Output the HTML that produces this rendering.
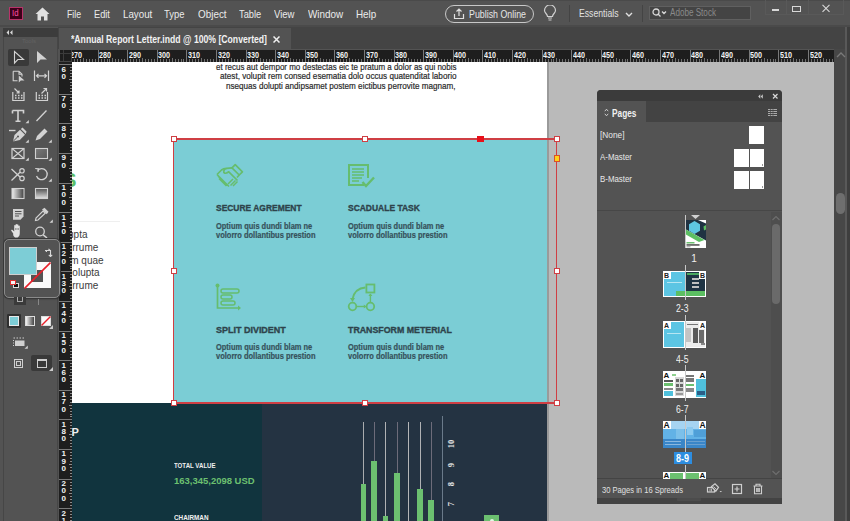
<!DOCTYPE html><html><head><meta charset="utf-8"><style>
*{margin:0;padding:0;box-sizing:border-box}
html,body{width:850px;height:521px;overflow:hidden;background:#535353;font-family:"Liberation Sans",sans-serif}
.a{position:absolute}
.t{position:absolute;white-space:nowrap;line-height:1;transform-origin:0 0}
</style></head><body><div class="a" style="left:0;top:0;width:850px;height:27px;background:#535353"></div><div class="a" style="left:0;top:0;width:850px;height:1px;background:#4a4a4a"></div><div class="a" style="left:0;top:25px;width:850px;height:2px;background:#4a4a4a"></div><div class="a" style="left:9px;top:6.5px;width:13.5px;height:13.5px;background:#3c0019;border:1px solid #b8346a"></div><div class="t" style="left:12.3px;top:9.3px;font-size:8.5px;color:#ff50a8;transform:scaleX(0.9163)">Id</div><svg class="a" style="left:35px;top:7px" width="15" height="14" viewBox="0 0 15 14"><path d="M7.5 0.5 L0.5 7 H2.5 V13.5 H6 V9.5 H9 V13.5 H12.5 V7 H14.5 Z" fill="#e0e0e0"/></svg><div class="t" style="left:66.7px;top:8.7px;font-size:10.5px;color:#ebebeb;transform:scaleX(0.8332)">File</div><div class="t" style="left:93.9px;top:8.7px;font-size:10.5px;color:#ebebeb;transform:scaleX(0.8788)">Edit</div><div class="t" style="left:122.5px;top:8.7px;font-size:10.5px;color:#ebebeb;transform:scaleX(0.9292)">Layout</div><div class="t" style="left:164.0px;top:8.7px;font-size:10.5px;color:#ebebeb;transform:scaleX(0.8961)">Type</div><div class="t" style="left:197.7px;top:8.7px;font-size:10.5px;color:#ebebeb;transform:scaleX(0.9420)">Object</div><div class="t" style="left:238.9px;top:8.7px;font-size:10.5px;color:#ebebeb;transform:scaleX(0.8841)">Table</div><div class="t" style="left:274.2px;top:8.7px;font-size:10.5px;color:#ebebeb;transform:scaleX(0.9080)">View</div><div class="t" style="left:308.3px;top:8.7px;font-size:10.5px;color:#ebebeb;transform:scaleX(0.9422)">Window</div><div class="t" style="left:356.1px;top:8.7px;font-size:10.5px;color:#ebebeb;transform:scaleX(0.9394)">Help</div><div class="a" style="left:445px;top:5px;width:89px;height:18px;border:1.2px solid #c8c8c8;border-radius:9px"></div><svg class="a" style="left:453px;top:8px" width="12" height="12" viewBox="0 0 12 12"><path d="M6 1 V8 M3.5 3.5 L6 1 L8.5 3.5 M1.5 6 V10.5 H10.5 V6" stroke="#e0e0e0" stroke-width="1.2" fill="none"/></svg><div class="t" style="left:469px;top:8.5px;font-size:10.5px;color:#e6e6e6;transform:scaleX(0.8417)">Publish Online</div><svg class="a" style="left:543px;top:5px" width="14" height="17" viewBox="0 0 14 17"><path d="M4.5 11.5 C4.5 9 1.5 8 1.5 5.5 A5.5 5.5 0 0 1 12.5 5.5 C12.5 8 9.5 9 9.5 11.5 Z" stroke="#d0d0d0" stroke-width="1.2" fill="none"/><path d="M5 13 H9 M5.5 15 H8.5" stroke="#d0d0d0" stroke-width="1.2"/></svg><div class="a" style="left:569px;top:5px;width:1px;height:17px;background:#444"></div><div class="t" style="left:579px;top:8px;font-size:10.5px;color:#e0e0e0;transform:scaleX(0.8253)">Essentials</div><svg class="a" style="left:625px;top:12px" width="8" height="6" viewBox="0 0 8 6"><path d="M1 1 L4 4 L7 1" stroke="#e0e0e0" stroke-width="1.4" fill="none"/></svg><div class="a" style="left:642px;top:5px;width:1px;height:17px;background:#444"></div><div class="a" style="left:649px;top:6px;width:102px;height:14px;background:#444444;border:1px solid #606060"></div><svg class="a" style="left:652px;top:8px" width="16" height="10" viewBox="0 0 16 10"><circle cx="4" cy="4" r="3" stroke="#d8d8d8" stroke-width="1.3" fill="none"/><path d="M6 6 L8.5 8.5 M10 3.5 L12 5.5 L14 3.5" stroke="#d8d8d8" stroke-width="1.3" fill="none"/></svg><div class="t" style="left:669.5px;top:8px;font-size:10px;color:#8a8a8a;transform:scaleX(0.8110)">Adobe Stock</div><div class="a" style="left:765px;top:0;width:79px;height:15px;border:1px solid #595959;border-top:none"></div><div class="a" style="left:786px;top:0;width:1px;height:15px;background:#595959"></div><div class="a" style="left:808px;top:0;width:1px;height:15px;background:#595959"></div><div class="a" style="left:772px;top:9px;width:7px;height:2px;background:#d8d8d8"></div><div class="a" style="left:792px;top:6px;width:9px;height:6px;border:1.5px solid #d8d8d8"></div><svg class="a" style="left:821px;top:4px" width="10" height="9" viewBox="0 0 10 9"><path d="M1.5 0.8 L8.5 7.8 M8.5 0.8 L1.5 7.8" stroke="#d8d8d8" stroke-width="1.1"/></svg><div class="a" style="left:58px;top:27px;width:792px;height:22px;background:#444444"></div><div class="a" style="left:59px;top:28px;width:232px;height:21px;background:#535353"></div><div class="t" style="left:70.8px;top:34px;font-size:10.5px;color:#f2f2f2;font-weight:bold;transform:scaleX(0.8243)">*Annual Report Letter.indd @ 100% [Converted]</div><svg class="a" style="left:273px;top:36px" width="7" height="7" viewBox="0 0 7 7"><path d="M0.5 0.5 L6.5 6.5 M6.5 0.5 L0.5 6.5" stroke="#f0f0f0" stroke-width="1.5"/></svg><div class="a" style="left:72px;top:62px;width:763px;height:459px;background:#bababa"></div><div class="a" style="left:72px;top:62px;width:475px;height:341px;background:#ffffff"></div><div class="a" style="left:547px;top:62px;width:2px;height:459px;background:#9a9a9a"></div><div class="t" style="left:216px;top:61.6px;font-size:9.5px;color:#282828;transform:scaleX(0.8403);-webkit-text-stroke:0.2px #282828">et recus aut dempor mo destectas eic te pratum a dolor as qui nobis</div><div class="t" style="left:220px;top:71.1px;font-size:9.5px;color:#282828;transform:scaleX(0.8579);-webkit-text-stroke:0.2px #282828">atest, volupit rem consed esematia dolo occus quatenditat laborio</div><div class="t" style="left:226px;top:81.1px;font-size:9.5px;color:#282828;transform:scaleX(0.8538);-webkit-text-stroke:0.2px #282828">nsequas dolupti andipsamet postem eictibus perrovite magnam,</div><div class="a" style="left:72px;top:165px;width:8px;height:28px;overflow:hidden"><div class="t" style="left:-9.5px;top:4.2px;font-size:21px;font-weight:bold;color:#5cbf6a">S</div></div><div class="a" style="left:72px;top:221px;width:48px;height:1px;background:#efefef"></div><div class="t" style="left:68.03px;top:230.2px;font-size:10px;color:#3c3c3c">upta</div><div class="t" style="left:72.17px;top:243.1px;font-size:10px;color:#3c3c3c">rrume</div><div class="t" style="left:70.24px;top:255.6px;font-size:10px;color:#3c3c3c">m quae</div><div class="t" style="left:72.35px;top:268px;font-size:10px;color:#3c3c3c">olupta</div><div class="t" style="left:72.17px;top:280.6px;font-size:10px;color:#3c3c3c">rrume</div><div class="a" style="left:174px;top:139.5px;width:373px;height:263px;background:#7bcdd5"></div><svg class="a" style="left:211.5px;top:159.2px" width="34" height="34" viewBox="0 0 34 34"><path d="M20 8.8 L23.2 5.6 L30.4 12.8 L27.2 16 Z" fill="none" stroke="#66bd6e" stroke-width="1.7" stroke-linejoin="round"/><path d="M5 15.5 L9.5 11 C11 9.8 12.5 9.4 14.5 9.4 L20 8.8" fill="none" stroke="#66bd6e" stroke-width="1.7" stroke-linejoin="round"/><path d="M14.5 9.4 C11.5 10 11 13.3 12.8 14.1 C14 14.6 15.3 13.8 16.8 12.8 L25.5 21.5" fill="none" stroke="#66bd6e" stroke-width="1.7" stroke-linejoin="round"/><path d="M27.2 16 L25 18.5" stroke="#66bd6e" stroke-width="1.7"/><path d="M5 15.5 L17 27.5 M7 19.5 L14.5 27 M6 17 L15.5 26.5" stroke="#66bd6e" stroke-width="1.6"/><path d="M16 25 L21 20 M18.5 26.5 L23.5 21.5 M21 27 L25.5 22.5" stroke="#66bd6e" stroke-width="1.5"/></svg><svg class="a" style="left:347px;top:163px" width="29" height="26" viewBox="0 0 29 26"><path d="M17 22 H2 V2 H21 V15" fill="none" stroke="#66bd6e" stroke-width="2"/><path d="M5 6 H17 M5 9 H17 M5 12 H17 M5 15 H15 M5 18 H12" stroke="#66bd6e" stroke-width="1.6"/><path d="M15.5 19 L19 23 L27 14.5" fill="none" stroke="#66bd6e" stroke-width="2.4"/></svg><svg class="a" style="left:214px;top:282px" width="30" height="31" viewBox="0 0 30 31"><circle cx="3.5" cy="3.5" r="2" fill="#66bd6e"/><path d="M3.5 3.5 V26 H26" fill="none" stroke="#66bd6e" stroke-width="1.7"/><path d="M24 23.5 L27 26 L24 28.5 Z" fill="#66bd6e"/><rect x="7" y="7" width="18" height="4" rx="2" fill="none" stroke="#66bd6e" stroke-width="1.5"/><rect x="7" y="13" width="11" height="4" rx="2" fill="none" stroke="#66bd6e" stroke-width="1.5"/><rect x="7" y="19" width="14" height="4" rx="2" fill="none" stroke="#66bd6e" stroke-width="1.5"/></svg><svg class="a" style="left:347px;top:282px" width="30" height="31" viewBox="0 0 30 31"><rect x="19.4" y="2.5" width="8" height="8" fill="none" stroke="#66bd6e" stroke-width="1.8"/><circle cx="5.5" cy="24.5" r="3.8" fill="none" stroke="#66bd6e" stroke-width="1.8"/><circle cx="23.4" cy="24.5" r="3.8" fill="none" stroke="#66bd6e" stroke-width="1.8"/><path d="M18.4 5.5 C11.5 6 7 10 5.5 17" fill="none" stroke="#66bd6e" stroke-width="1.8"/><path d="M3 16 L5.5 20 L8 16 Z" fill="#66bd6e"/><path d="M9.5 24.5 H18.5" stroke="#66bd6e" stroke-width="1.4"/><path d="M16.8 22.5 L19.4 24.5 L16.8 26.5 Z" fill="#66bd6e"/><path d="M23.4 20.5 V12" stroke="#66bd6e" stroke-width="1.4"/><path d="M21.4 14 L23.4 11.5 L25.4 14 Z" fill="#66bd6e"/></svg><div class="t" style="left:215.8px;top:202.84px;font-size:9.4px;color:#2e434b;font-weight:bold;transform:scaleX(0.9012);-webkit-text-stroke:0.35px #2e434b">SECURE AGREMENT</div><div class="t" style="left:215.8px;top:221.87px;font-size:8.3px;color:#36525b;font-weight:bold;transform:scaleX(0.8996);-webkit-text-stroke:0.2px #36525b">Optium quis dundi blam ne</div><div class="t" style="left:215.8px;top:230.67px;font-size:8.3px;color:#36525b;font-weight:bold;transform:scaleX(0.9031);-webkit-text-stroke:0.2px #36525b">volorro dollantibus prestion</div><div class="t" style="left:348.2px;top:202.84px;font-size:9.4px;color:#2e434b;font-weight:bold;transform:scaleX(0.9030);-webkit-text-stroke:0.35px #2e434b">SCADUALE TASK</div><div class="t" style="left:348.2px;top:221.87px;font-size:8.3px;color:#36525b;font-weight:bold;transform:scaleX(0.8996);-webkit-text-stroke:0.2px #36525b">Optium quis dundi blam ne</div><div class="t" style="left:348.2px;top:230.67px;font-size:8.3px;color:#36525b;font-weight:bold;transform:scaleX(0.9031);-webkit-text-stroke:0.2px #36525b">volorro dollantibus prestion</div><div class="t" style="left:215.8px;top:324.94px;font-size:9.4px;color:#2e434b;font-weight:bold;transform:scaleX(0.9572);-webkit-text-stroke:0.35px #2e434b">SPLIT DIVIDENT</div><div class="t" style="left:215.8px;top:342.97px;font-size:8.3px;color:#36525b;font-weight:bold;transform:scaleX(0.8996);-webkit-text-stroke:0.2px #36525b">Optium quis dundi blam ne</div><div class="t" style="left:215.8px;top:352.47px;font-size:8.3px;color:#36525b;font-weight:bold;transform:scaleX(0.9031);-webkit-text-stroke:0.2px #36525b">volorro dollantibus prestion</div><div class="t" style="left:348.2px;top:324.94px;font-size:9.4px;color:#2e434b;font-weight:bold;transform:scaleX(0.9400);-webkit-text-stroke:0.35px #2e434b">TRANSFORM METERIAL</div><div class="t" style="left:348.2px;top:342.97px;font-size:8.3px;color:#36525b;font-weight:bold;transform:scaleX(0.8996);-webkit-text-stroke:0.2px #36525b">Optium quis dundi blam ne</div><div class="t" style="left:348.2px;top:352.47px;font-size:8.3px;color:#36525b;font-weight:bold;transform:scaleX(0.9031);-webkit-text-stroke:0.2px #36525b">volorro dollantibus prestion</div><div class="a" style="left:72px;top:403px;width:190px;height:118px;background:#11343e"></div><div class="a" style="left:262px;top:403px;width:285px;height:118px;background:#243342"></div><div class="t" style="left:71.46px;top:426.7px;font-size:11px;color:#f0f0f0;font-weight:bold">P</div><div class="t" style="left:173.8px;top:462px;font-size:7.5px;color:#f0f0f0;font-weight:bold;transform:scaleX(0.8137)">TOTAL VALUE</div><div class="t" style="left:173.8px;top:477.2px;font-size:9px;color:#6cc070;font-weight:bold;transform:scaleX(1.0527)">163,345,2098 USD</div><div class="t" style="left:173.8px;top:514px;font-size:7.5px;color:#f0f0f0;font-weight:bold;transform:scaleX(0.8447)">CHAIRMAN</div><div class="a" style="left:362.8px;top:422px;width:1.2px;height:99px;background:#a9acae"></div><div class="a" style="left:360.5px;top:484px;width:5.6px;height:37px;background:#6cc070"></div><div class="a" style="left:373.5px;top:422px;width:1.2px;height:99px;background:#6d6c7a"></div><div class="a" style="left:371.2px;top:460.5px;width:5.6px;height:60.5px;background:#6cc070"></div><div class="a" style="left:385.1px;top:422px;width:1.2px;height:99px;background:#b0b2b4"></div><div class="a" style="left:382.8px;top:516px;width:5.6px;height:5px;background:#6cc070"></div><div class="a" style="left:396.5px;top:422px;width:1.2px;height:99px;background:#6d6c7a"></div><div class="a" style="left:394.2px;top:473.4px;width:5.6px;height:47.60000000000002px;background:#6cc070"></div><div class="a" style="left:408.1px;top:422px;width:1.2px;height:99px;background:#b5b7b8"></div><div class="a" style="left:419.5px;top:422px;width:1.2px;height:99px;background:#b0b2b4"></div><div class="a" style="left:417.2px;top:488.7px;width:5.6px;height:32.30000000000001px;background:#6cc070"></div><div class="a" style="left:430.5px;top:422px;width:1.2px;height:99px;background:#6d6c7a"></div><div class="a" style="left:428.2px;top:500.3px;width:5.6px;height:20.69999999999999px;background:#6cc070"></div><div class="a" style="left:442.2px;top:416px;width:1.2px;height:105px;background:#6a7a8a"></div><div class="t" style="left:451px;top:443.5px;font-size:8.5px;font-weight:bold;color:#e8e8e8;font-family:'Liberation Serif',serif;transform:translate(-50%,-50%) rotate(-90deg);transform-origin:50% 50%;">10</div><div class="t" style="left:451px;top:465.2px;font-size:8.5px;font-weight:bold;color:#e8e8e8;font-family:'Liberation Serif',serif;transform:translate(-50%,-50%) rotate(-90deg);transform-origin:50% 50%;">9</div><div class="t" style="left:451px;top:484px;font-size:8.5px;font-weight:bold;color:#e8e8e8;font-family:'Liberation Serif',serif;transform:translate(-50%,-50%) rotate(-90deg);transform-origin:50% 50%;">8</div><div class="t" style="left:451px;top:503.8px;font-size:8.5px;font-weight:bold;color:#e8e8e8;font-family:'Liberation Serif',serif;transform:translate(-50%,-50%) rotate(-90deg);transform-origin:50% 50%;">7</div><div class="a" style="left:483.5px;top:514.7px;width:15.3px;height:7px;background:#6cc070"></div><div class="a" style="left:489.5px;top:519px;width:4px;height:2px;background:#e8f5e8;border-radius:2px 2px 0 0"></div><div class="a" style="left:173px;top:138.3px;width:384px;height:1.4px;background:#cf3f44"></div><div class="a" style="left:173px;top:402.3px;width:384px;height:1.4px;background:#cf3f44"></div><div class="a" style="left:172.8px;top:138.5px;width:1.4px;height:265px;background:#cf3f44"></div><div class="a" style="left:555.8px;top:138.5px;width:1.4px;height:265px;background:#cf3f44"></div><div class="a" style="left:170.5px;top:136px;width:6px;height:6px;background:#fff;border:1px solid #cf3f44"></div><div class="a" style="left:170.5px;top:268px;width:6px;height:6px;background:#fff;border:1px solid #cf3f44"></div><div class="a" style="left:170.5px;top:400px;width:6px;height:6px;background:#fff;border:1px solid #cf3f44"></div><div class="a" style="left:362.2px;top:136px;width:6px;height:6px;background:#fff;border:1px solid #cf3f44"></div><div class="a" style="left:362.2px;top:400px;width:6px;height:6px;background:#fff;border:1px solid #cf3f44"></div><div class="a" style="left:553.5px;top:136px;width:6px;height:6px;background:#fff;border:1px solid #cf3f44"></div><div class="a" style="left:553.5px;top:268px;width:6px;height:6px;background:#fff;border:1px solid #cf3f44"></div><div class="a" style="left:553.5px;top:400px;width:6px;height:6px;background:#fff;border:1px solid #cf3f44"></div><div class="a" style="left:477px;top:136.3px;width:6.5px;height:6.2px;background:#e8101a"></div><div class="a" style="left:553.5px;top:155px;width:6.5px;height:7px;background:#ffd11a;border:1px solid #d9502a"></div><div class="a" style="left:60px;top:50px;width:774px;height:12px;background:#1e1e1e;overflow:hidden"><div class="t" style="left:-20.0px;top:0.9px;font-size:9px;font-weight:bold;color:#f2f2f2;transform:scaleX(0.8)">260</div><div class="t" style="left:9.6px;top:0.9px;font-size:9px;font-weight:bold;color:#f2f2f2;transform:scaleX(0.8)">270</div><div class="t" style="left:39.2px;top:0.9px;font-size:9px;font-weight:bold;color:#f2f2f2;transform:scaleX(0.8)">280</div><div class="t" style="left:68.8px;top:0.9px;font-size:9px;font-weight:bold;color:#f2f2f2;transform:scaleX(0.8)">290</div><div class="t" style="left:98.4px;top:0.9px;font-size:9px;font-weight:bold;color:#f2f2f2;transform:scaleX(0.8)">300</div><div class="t" style="left:128.0px;top:0.9px;font-size:9px;font-weight:bold;color:#f2f2f2;transform:scaleX(0.8)">310</div><div class="t" style="left:157.6px;top:0.9px;font-size:9px;font-weight:bold;color:#f2f2f2;transform:scaleX(0.8)">320</div><div class="t" style="left:187.2px;top:0.9px;font-size:9px;font-weight:bold;color:#f2f2f2;transform:scaleX(0.8)">330</div><div class="t" style="left:216.8px;top:0.9px;font-size:9px;font-weight:bold;color:#f2f2f2;transform:scaleX(0.8)">340</div><div class="t" style="left:246.4px;top:0.9px;font-size:9px;font-weight:bold;color:#f2f2f2;transform:scaleX(0.8)">350</div><div class="t" style="left:276.0px;top:0.9px;font-size:9px;font-weight:bold;color:#f2f2f2;transform:scaleX(0.8)">360</div><div class="t" style="left:305.6px;top:0.9px;font-size:9px;font-weight:bold;color:#f2f2f2;transform:scaleX(0.8)">370</div><div class="t" style="left:335.2px;top:0.9px;font-size:9px;font-weight:bold;color:#f2f2f2;transform:scaleX(0.8)">380</div><div class="t" style="left:364.8px;top:0.9px;font-size:9px;font-weight:bold;color:#f2f2f2;transform:scaleX(0.8)">390</div><div class="t" style="left:394.4px;top:0.9px;font-size:9px;font-weight:bold;color:#f2f2f2;transform:scaleX(0.8)">400</div><div class="t" style="left:424.0px;top:0.9px;font-size:9px;font-weight:bold;color:#f2f2f2;transform:scaleX(0.8)">410</div><div class="t" style="left:453.6px;top:0.9px;font-size:9px;font-weight:bold;color:#f2f2f2;transform:scaleX(0.8)">420</div><div class="t" style="left:483.2px;top:0.9px;font-size:9px;font-weight:bold;color:#f2f2f2;transform:scaleX(0.8)">430</div><div class="t" style="left:512.8px;top:0.9px;font-size:9px;font-weight:bold;color:#f2f2f2;transform:scaleX(0.8)">440</div><div class="t" style="left:542.4px;top:0.9px;font-size:9px;font-weight:bold;color:#f2f2f2;transform:scaleX(0.8)">450</div><div class="t" style="left:572.0px;top:0.9px;font-size:9px;font-weight:bold;color:#f2f2f2;transform:scaleX(0.8)">460</div><div class="t" style="left:601.6px;top:0.9px;font-size:9px;font-weight:bold;color:#f2f2f2;transform:scaleX(0.8)">470</div><div class="t" style="left:631.2px;top:0.9px;font-size:9px;font-weight:bold;color:#f2f2f2;transform:scaleX(0.8)">480</div><div class="t" style="left:660.8px;top:0.9px;font-size:9px;font-weight:bold;color:#f2f2f2;transform:scaleX(0.8)">490</div><div class="t" style="left:690.4px;top:0.9px;font-size:9px;font-weight:bold;color:#f2f2f2;transform:scaleX(0.8)">500</div><div class="t" style="left:720.0px;top:0.9px;font-size:9px;font-weight:bold;color:#f2f2f2;transform:scaleX(0.8)">510</div><div class="t" style="left:749.6px;top:0.9px;font-size:9px;font-weight:bold;color:#f2f2f2;transform:scaleX(0.8)">520</div><div class="t" style="left:779.2px;top:0.9px;font-size:9px;font-weight:bold;color:#f2f2f2;transform:scaleX(0.8)">530</div><div class="t" style="left:808.8px;top:0.9px;font-size:9px;font-weight:bold;color:#f2f2f2;transform:scaleX(0.8)">540</div><div class="a" style="left:-21.6px;top:0;width:1px;height:12px;background:#7a7a7a"></div><div class="a" style="left:-18.6px;top:9px;width:1px;height:3px;background:#707070"></div><div class="a" style="left:-15.7px;top:9px;width:1px;height:3px;background:#707070"></div><div class="a" style="left:-12.7px;top:9px;width:1px;height:3px;background:#707070"></div><div class="a" style="left:-9.8px;top:9px;width:1px;height:3px;background:#707070"></div><div class="a" style="left:-6.8px;top:8px;width:1px;height:4px;background:#707070"></div><div class="a" style="left:-3.8px;top:9px;width:1px;height:3px;background:#707070"></div><div class="a" style="left:-0.9px;top:9px;width:1px;height:3px;background:#707070"></div><div class="a" style="left:2.1px;top:9px;width:1px;height:3px;background:#707070"></div><div class="a" style="left:5.0px;top:9px;width:1px;height:3px;background:#707070"></div><div class="a" style="left:8.0px;top:0;width:1px;height:12px;background:#7a7a7a"></div><div class="a" style="left:11.0px;top:9px;width:1px;height:3px;background:#707070"></div><div class="a" style="left:13.9px;top:9px;width:1px;height:3px;background:#707070"></div><div class="a" style="left:16.9px;top:9px;width:1px;height:3px;background:#707070"></div><div class="a" style="left:19.8px;top:9px;width:1px;height:3px;background:#707070"></div><div class="a" style="left:22.8px;top:8px;width:1px;height:4px;background:#707070"></div><div class="a" style="left:25.8px;top:9px;width:1px;height:3px;background:#707070"></div><div class="a" style="left:28.7px;top:9px;width:1px;height:3px;background:#707070"></div><div class="a" style="left:31.7px;top:9px;width:1px;height:3px;background:#707070"></div><div class="a" style="left:34.6px;top:9px;width:1px;height:3px;background:#707070"></div><div class="a" style="left:37.6px;top:0;width:1px;height:12px;background:#7a7a7a"></div><div class="a" style="left:40.6px;top:9px;width:1px;height:3px;background:#707070"></div><div class="a" style="left:43.5px;top:9px;width:1px;height:3px;background:#707070"></div><div class="a" style="left:46.5px;top:9px;width:1px;height:3px;background:#707070"></div><div class="a" style="left:49.4px;top:9px;width:1px;height:3px;background:#707070"></div><div class="a" style="left:52.4px;top:8px;width:1px;height:4px;background:#707070"></div><div class="a" style="left:55.4px;top:9px;width:1px;height:3px;background:#707070"></div><div class="a" style="left:58.3px;top:9px;width:1px;height:3px;background:#707070"></div><div class="a" style="left:61.3px;top:9px;width:1px;height:3px;background:#707070"></div><div class="a" style="left:64.2px;top:9px;width:1px;height:3px;background:#707070"></div><div class="a" style="left:67.2px;top:0;width:1px;height:12px;background:#7a7a7a"></div><div class="a" style="left:70.2px;top:9px;width:1px;height:3px;background:#707070"></div><div class="a" style="left:73.1px;top:9px;width:1px;height:3px;background:#707070"></div><div class="a" style="left:76.1px;top:9px;width:1px;height:3px;background:#707070"></div><div class="a" style="left:79.0px;top:9px;width:1px;height:3px;background:#707070"></div><div class="a" style="left:82.0px;top:8px;width:1px;height:4px;background:#707070"></div><div class="a" style="left:85.0px;top:9px;width:1px;height:3px;background:#707070"></div><div class="a" style="left:87.9px;top:9px;width:1px;height:3px;background:#707070"></div><div class="a" style="left:90.9px;top:9px;width:1px;height:3px;background:#707070"></div><div class="a" style="left:93.8px;top:9px;width:1px;height:3px;background:#707070"></div><div class="a" style="left:96.8px;top:0;width:1px;height:12px;background:#7a7a7a"></div><div class="a" style="left:99.8px;top:9px;width:1px;height:3px;background:#707070"></div><div class="a" style="left:102.7px;top:9px;width:1px;height:3px;background:#707070"></div><div class="a" style="left:105.7px;top:9px;width:1px;height:3px;background:#707070"></div><div class="a" style="left:108.6px;top:9px;width:1px;height:3px;background:#707070"></div><div class="a" style="left:111.6px;top:8px;width:1px;height:4px;background:#707070"></div><div class="a" style="left:114.6px;top:9px;width:1px;height:3px;background:#707070"></div><div class="a" style="left:117.5px;top:9px;width:1px;height:3px;background:#707070"></div><div class="a" style="left:120.5px;top:9px;width:1px;height:3px;background:#707070"></div><div class="a" style="left:123.4px;top:9px;width:1px;height:3px;background:#707070"></div><div class="a" style="left:126.4px;top:0;width:1px;height:12px;background:#7a7a7a"></div><div class="a" style="left:129.4px;top:9px;width:1px;height:3px;background:#707070"></div><div class="a" style="left:132.3px;top:9px;width:1px;height:3px;background:#707070"></div><div class="a" style="left:135.3px;top:9px;width:1px;height:3px;background:#707070"></div><div class="a" style="left:138.2px;top:9px;width:1px;height:3px;background:#707070"></div><div class="a" style="left:141.2px;top:8px;width:1px;height:4px;background:#707070"></div><div class="a" style="left:144.2px;top:9px;width:1px;height:3px;background:#707070"></div><div class="a" style="left:147.1px;top:9px;width:1px;height:3px;background:#707070"></div><div class="a" style="left:150.1px;top:9px;width:1px;height:3px;background:#707070"></div><div class="a" style="left:153.0px;top:9px;width:1px;height:3px;background:#707070"></div><div class="a" style="left:156.0px;top:0;width:1px;height:12px;background:#7a7a7a"></div><div class="a" style="left:159.0px;top:9px;width:1px;height:3px;background:#707070"></div><div class="a" style="left:161.9px;top:9px;width:1px;height:3px;background:#707070"></div><div class="a" style="left:164.9px;top:9px;width:1px;height:3px;background:#707070"></div><div class="a" style="left:167.8px;top:9px;width:1px;height:3px;background:#707070"></div><div class="a" style="left:170.8px;top:8px;width:1px;height:4px;background:#707070"></div><div class="a" style="left:173.8px;top:9px;width:1px;height:3px;background:#707070"></div><div class="a" style="left:176.7px;top:9px;width:1px;height:3px;background:#707070"></div><div class="a" style="left:179.7px;top:9px;width:1px;height:3px;background:#707070"></div><div class="a" style="left:182.6px;top:9px;width:1px;height:3px;background:#707070"></div><div class="a" style="left:185.6px;top:0;width:1px;height:12px;background:#7a7a7a"></div><div class="a" style="left:188.6px;top:9px;width:1px;height:3px;background:#707070"></div><div class="a" style="left:191.5px;top:9px;width:1px;height:3px;background:#707070"></div><div class="a" style="left:194.5px;top:9px;width:1px;height:3px;background:#707070"></div><div class="a" style="left:197.4px;top:9px;width:1px;height:3px;background:#707070"></div><div class="a" style="left:200.4px;top:8px;width:1px;height:4px;background:#707070"></div><div class="a" style="left:203.4px;top:9px;width:1px;height:3px;background:#707070"></div><div class="a" style="left:206.3px;top:9px;width:1px;height:3px;background:#707070"></div><div class="a" style="left:209.3px;top:9px;width:1px;height:3px;background:#707070"></div><div class="a" style="left:212.2px;top:9px;width:1px;height:3px;background:#707070"></div><div class="a" style="left:215.2px;top:0;width:1px;height:12px;background:#7a7a7a"></div><div class="a" style="left:218.2px;top:9px;width:1px;height:3px;background:#707070"></div><div class="a" style="left:221.1px;top:9px;width:1px;height:3px;background:#707070"></div><div class="a" style="left:224.1px;top:9px;width:1px;height:3px;background:#707070"></div><div class="a" style="left:227.0px;top:9px;width:1px;height:3px;background:#707070"></div><div class="a" style="left:230.0px;top:8px;width:1px;height:4px;background:#707070"></div><div class="a" style="left:233.0px;top:9px;width:1px;height:3px;background:#707070"></div><div class="a" style="left:235.9px;top:9px;width:1px;height:3px;background:#707070"></div><div class="a" style="left:238.9px;top:9px;width:1px;height:3px;background:#707070"></div><div class="a" style="left:241.8px;top:9px;width:1px;height:3px;background:#707070"></div><div class="a" style="left:244.8px;top:0;width:1px;height:12px;background:#7a7a7a"></div><div class="a" style="left:247.8px;top:9px;width:1px;height:3px;background:#707070"></div><div class="a" style="left:250.7px;top:9px;width:1px;height:3px;background:#707070"></div><div class="a" style="left:253.7px;top:9px;width:1px;height:3px;background:#707070"></div><div class="a" style="left:256.6px;top:9px;width:1px;height:3px;background:#707070"></div><div class="a" style="left:259.6px;top:8px;width:1px;height:4px;background:#707070"></div><div class="a" style="left:262.6px;top:9px;width:1px;height:3px;background:#707070"></div><div class="a" style="left:265.5px;top:9px;width:1px;height:3px;background:#707070"></div><div class="a" style="left:268.5px;top:9px;width:1px;height:3px;background:#707070"></div><div class="a" style="left:271.4px;top:9px;width:1px;height:3px;background:#707070"></div><div class="a" style="left:274.4px;top:0;width:1px;height:12px;background:#7a7a7a"></div><div class="a" style="left:277.4px;top:9px;width:1px;height:3px;background:#707070"></div><div class="a" style="left:280.3px;top:9px;width:1px;height:3px;background:#707070"></div><div class="a" style="left:283.3px;top:9px;width:1px;height:3px;background:#707070"></div><div class="a" style="left:286.2px;top:9px;width:1px;height:3px;background:#707070"></div><div class="a" style="left:289.2px;top:8px;width:1px;height:4px;background:#707070"></div><div class="a" style="left:292.2px;top:9px;width:1px;height:3px;background:#707070"></div><div class="a" style="left:295.1px;top:9px;width:1px;height:3px;background:#707070"></div><div class="a" style="left:298.1px;top:9px;width:1px;height:3px;background:#707070"></div><div class="a" style="left:301.0px;top:9px;width:1px;height:3px;background:#707070"></div><div class="a" style="left:304.0px;top:0;width:1px;height:12px;background:#7a7a7a"></div><div class="a" style="left:307.0px;top:9px;width:1px;height:3px;background:#707070"></div><div class="a" style="left:309.9px;top:9px;width:1px;height:3px;background:#707070"></div><div class="a" style="left:312.9px;top:9px;width:1px;height:3px;background:#707070"></div><div class="a" style="left:315.8px;top:9px;width:1px;height:3px;background:#707070"></div><div class="a" style="left:318.8px;top:8px;width:1px;height:4px;background:#707070"></div><div class="a" style="left:321.8px;top:9px;width:1px;height:3px;background:#707070"></div><div class="a" style="left:324.7px;top:9px;width:1px;height:3px;background:#707070"></div><div class="a" style="left:327.7px;top:9px;width:1px;height:3px;background:#707070"></div><div class="a" style="left:330.6px;top:9px;width:1px;height:3px;background:#707070"></div><div class="a" style="left:333.6px;top:0;width:1px;height:12px;background:#7a7a7a"></div><div class="a" style="left:336.6px;top:9px;width:1px;height:3px;background:#707070"></div><div class="a" style="left:339.5px;top:9px;width:1px;height:3px;background:#707070"></div><div class="a" style="left:342.5px;top:9px;width:1px;height:3px;background:#707070"></div><div class="a" style="left:345.4px;top:9px;width:1px;height:3px;background:#707070"></div><div class="a" style="left:348.4px;top:8px;width:1px;height:4px;background:#707070"></div><div class="a" style="left:351.4px;top:9px;width:1px;height:3px;background:#707070"></div><div class="a" style="left:354.3px;top:9px;width:1px;height:3px;background:#707070"></div><div class="a" style="left:357.3px;top:9px;width:1px;height:3px;background:#707070"></div><div class="a" style="left:360.2px;top:9px;width:1px;height:3px;background:#707070"></div><div class="a" style="left:363.2px;top:0;width:1px;height:12px;background:#7a7a7a"></div><div class="a" style="left:366.2px;top:9px;width:1px;height:3px;background:#707070"></div><div class="a" style="left:369.1px;top:9px;width:1px;height:3px;background:#707070"></div><div class="a" style="left:372.1px;top:9px;width:1px;height:3px;background:#707070"></div><div class="a" style="left:375.0px;top:9px;width:1px;height:3px;background:#707070"></div><div class="a" style="left:378.0px;top:8px;width:1px;height:4px;background:#707070"></div><div class="a" style="left:381.0px;top:9px;width:1px;height:3px;background:#707070"></div><div class="a" style="left:383.9px;top:9px;width:1px;height:3px;background:#707070"></div><div class="a" style="left:386.9px;top:9px;width:1px;height:3px;background:#707070"></div><div class="a" style="left:389.8px;top:9px;width:1px;height:3px;background:#707070"></div><div class="a" style="left:392.8px;top:0;width:1px;height:12px;background:#7a7a7a"></div><div class="a" style="left:395.8px;top:9px;width:1px;height:3px;background:#707070"></div><div class="a" style="left:398.7px;top:9px;width:1px;height:3px;background:#707070"></div><div class="a" style="left:401.7px;top:9px;width:1px;height:3px;background:#707070"></div><div class="a" style="left:404.6px;top:9px;width:1px;height:3px;background:#707070"></div><div class="a" style="left:407.6px;top:8px;width:1px;height:4px;background:#707070"></div><div class="a" style="left:410.6px;top:9px;width:1px;height:3px;background:#707070"></div><div class="a" style="left:413.5px;top:9px;width:1px;height:3px;background:#707070"></div><div class="a" style="left:416.5px;top:9px;width:1px;height:3px;background:#707070"></div><div class="a" style="left:419.4px;top:9px;width:1px;height:3px;background:#707070"></div><div class="a" style="left:422.4px;top:0;width:1px;height:12px;background:#7a7a7a"></div><div class="a" style="left:425.4px;top:9px;width:1px;height:3px;background:#707070"></div><div class="a" style="left:428.3px;top:9px;width:1px;height:3px;background:#707070"></div><div class="a" style="left:431.3px;top:9px;width:1px;height:3px;background:#707070"></div><div class="a" style="left:434.2px;top:9px;width:1px;height:3px;background:#707070"></div><div class="a" style="left:437.2px;top:8px;width:1px;height:4px;background:#707070"></div><div class="a" style="left:440.2px;top:9px;width:1px;height:3px;background:#707070"></div><div class="a" style="left:443.1px;top:9px;width:1px;height:3px;background:#707070"></div><div class="a" style="left:446.1px;top:9px;width:1px;height:3px;background:#707070"></div><div class="a" style="left:449.0px;top:9px;width:1px;height:3px;background:#707070"></div><div class="a" style="left:452.0px;top:0;width:1px;height:12px;background:#7a7a7a"></div><div class="a" style="left:455.0px;top:9px;width:1px;height:3px;background:#707070"></div><div class="a" style="left:457.9px;top:9px;width:1px;height:3px;background:#707070"></div><div class="a" style="left:460.9px;top:9px;width:1px;height:3px;background:#707070"></div><div class="a" style="left:463.8px;top:9px;width:1px;height:3px;background:#707070"></div><div class="a" style="left:466.8px;top:8px;width:1px;height:4px;background:#707070"></div><div class="a" style="left:469.8px;top:9px;width:1px;height:3px;background:#707070"></div><div class="a" style="left:472.7px;top:9px;width:1px;height:3px;background:#707070"></div><div class="a" style="left:475.7px;top:9px;width:1px;height:3px;background:#707070"></div><div class="a" style="left:478.6px;top:9px;width:1px;height:3px;background:#707070"></div><div class="a" style="left:481.6px;top:0;width:1px;height:12px;background:#7a7a7a"></div><div class="a" style="left:484.6px;top:9px;width:1px;height:3px;background:#707070"></div><div class="a" style="left:487.5px;top:9px;width:1px;height:3px;background:#707070"></div><div class="a" style="left:490.5px;top:9px;width:1px;height:3px;background:#707070"></div><div class="a" style="left:493.4px;top:9px;width:1px;height:3px;background:#707070"></div><div class="a" style="left:496.4px;top:8px;width:1px;height:4px;background:#707070"></div><div class="a" style="left:499.4px;top:9px;width:1px;height:3px;background:#707070"></div><div class="a" style="left:502.3px;top:9px;width:1px;height:3px;background:#707070"></div><div class="a" style="left:505.3px;top:9px;width:1px;height:3px;background:#707070"></div><div class="a" style="left:508.2px;top:9px;width:1px;height:3px;background:#707070"></div><div class="a" style="left:511.2px;top:0;width:1px;height:12px;background:#7a7a7a"></div><div class="a" style="left:514.2px;top:9px;width:1px;height:3px;background:#707070"></div><div class="a" style="left:517.1px;top:9px;width:1px;height:3px;background:#707070"></div><div class="a" style="left:520.1px;top:9px;width:1px;height:3px;background:#707070"></div><div class="a" style="left:523.0px;top:9px;width:1px;height:3px;background:#707070"></div><div class="a" style="left:526.0px;top:8px;width:1px;height:4px;background:#707070"></div><div class="a" style="left:529.0px;top:9px;width:1px;height:3px;background:#707070"></div><div class="a" style="left:531.9px;top:9px;width:1px;height:3px;background:#707070"></div><div class="a" style="left:534.9px;top:9px;width:1px;height:3px;background:#707070"></div><div class="a" style="left:537.8px;top:9px;width:1px;height:3px;background:#707070"></div><div class="a" style="left:540.8px;top:0;width:1px;height:12px;background:#7a7a7a"></div><div class="a" style="left:543.8px;top:9px;width:1px;height:3px;background:#707070"></div><div class="a" style="left:546.7px;top:9px;width:1px;height:3px;background:#707070"></div><div class="a" style="left:549.7px;top:9px;width:1px;height:3px;background:#707070"></div><div class="a" style="left:552.6px;top:9px;width:1px;height:3px;background:#707070"></div><div class="a" style="left:555.6px;top:8px;width:1px;height:4px;background:#707070"></div><div class="a" style="left:558.6px;top:9px;width:1px;height:3px;background:#707070"></div><div class="a" style="left:561.5px;top:9px;width:1px;height:3px;background:#707070"></div><div class="a" style="left:564.5px;top:9px;width:1px;height:3px;background:#707070"></div><div class="a" style="left:567.4px;top:9px;width:1px;height:3px;background:#707070"></div><div class="a" style="left:570.4px;top:0;width:1px;height:12px;background:#7a7a7a"></div><div class="a" style="left:573.4px;top:9px;width:1px;height:3px;background:#707070"></div><div class="a" style="left:576.3px;top:9px;width:1px;height:3px;background:#707070"></div><div class="a" style="left:579.3px;top:9px;width:1px;height:3px;background:#707070"></div><div class="a" style="left:582.2px;top:9px;width:1px;height:3px;background:#707070"></div><div class="a" style="left:585.2px;top:8px;width:1px;height:4px;background:#707070"></div><div class="a" style="left:588.2px;top:9px;width:1px;height:3px;background:#707070"></div><div class="a" style="left:591.1px;top:9px;width:1px;height:3px;background:#707070"></div><div class="a" style="left:594.1px;top:9px;width:1px;height:3px;background:#707070"></div><div class="a" style="left:597.0px;top:9px;width:1px;height:3px;background:#707070"></div><div class="a" style="left:600.0px;top:0;width:1px;height:12px;background:#7a7a7a"></div><div class="a" style="left:603.0px;top:9px;width:1px;height:3px;background:#707070"></div><div class="a" style="left:605.9px;top:9px;width:1px;height:3px;background:#707070"></div><div class="a" style="left:608.9px;top:9px;width:1px;height:3px;background:#707070"></div><div class="a" style="left:611.8px;top:9px;width:1px;height:3px;background:#707070"></div><div class="a" style="left:614.8px;top:8px;width:1px;height:4px;background:#707070"></div><div class="a" style="left:617.8px;top:9px;width:1px;height:3px;background:#707070"></div><div class="a" style="left:620.7px;top:9px;width:1px;height:3px;background:#707070"></div><div class="a" style="left:623.7px;top:9px;width:1px;height:3px;background:#707070"></div><div class="a" style="left:626.6px;top:9px;width:1px;height:3px;background:#707070"></div><div class="a" style="left:629.6px;top:0;width:1px;height:12px;background:#7a7a7a"></div><div class="a" style="left:632.6px;top:9px;width:1px;height:3px;background:#707070"></div><div class="a" style="left:635.5px;top:9px;width:1px;height:3px;background:#707070"></div><div class="a" style="left:638.5px;top:9px;width:1px;height:3px;background:#707070"></div><div class="a" style="left:641.4px;top:9px;width:1px;height:3px;background:#707070"></div><div class="a" style="left:644.4px;top:8px;width:1px;height:4px;background:#707070"></div><div class="a" style="left:647.4px;top:9px;width:1px;height:3px;background:#707070"></div><div class="a" style="left:650.3px;top:9px;width:1px;height:3px;background:#707070"></div><div class="a" style="left:653.3px;top:9px;width:1px;height:3px;background:#707070"></div><div class="a" style="left:656.2px;top:9px;width:1px;height:3px;background:#707070"></div><div class="a" style="left:659.2px;top:0;width:1px;height:12px;background:#7a7a7a"></div><div class="a" style="left:662.2px;top:9px;width:1px;height:3px;background:#707070"></div><div class="a" style="left:665.1px;top:9px;width:1px;height:3px;background:#707070"></div><div class="a" style="left:668.1px;top:9px;width:1px;height:3px;background:#707070"></div><div class="a" style="left:671.0px;top:9px;width:1px;height:3px;background:#707070"></div><div class="a" style="left:674.0px;top:8px;width:1px;height:4px;background:#707070"></div><div class="a" style="left:677.0px;top:9px;width:1px;height:3px;background:#707070"></div><div class="a" style="left:679.9px;top:9px;width:1px;height:3px;background:#707070"></div><div class="a" style="left:682.9px;top:9px;width:1px;height:3px;background:#707070"></div><div class="a" style="left:685.8px;top:9px;width:1px;height:3px;background:#707070"></div><div class="a" style="left:688.8px;top:0;width:1px;height:12px;background:#7a7a7a"></div><div class="a" style="left:691.8px;top:9px;width:1px;height:3px;background:#707070"></div><div class="a" style="left:694.7px;top:9px;width:1px;height:3px;background:#707070"></div><div class="a" style="left:697.7px;top:9px;width:1px;height:3px;background:#707070"></div><div class="a" style="left:700.6px;top:9px;width:1px;height:3px;background:#707070"></div><div class="a" style="left:703.6px;top:8px;width:1px;height:4px;background:#707070"></div><div class="a" style="left:706.6px;top:9px;width:1px;height:3px;background:#707070"></div><div class="a" style="left:709.5px;top:9px;width:1px;height:3px;background:#707070"></div><div class="a" style="left:712.5px;top:9px;width:1px;height:3px;background:#707070"></div><div class="a" style="left:715.4px;top:9px;width:1px;height:3px;background:#707070"></div><div class="a" style="left:718.4px;top:0;width:1px;height:12px;background:#7a7a7a"></div><div class="a" style="left:721.4px;top:9px;width:1px;height:3px;background:#707070"></div><div class="a" style="left:724.3px;top:9px;width:1px;height:3px;background:#707070"></div><div class="a" style="left:727.3px;top:9px;width:1px;height:3px;background:#707070"></div><div class="a" style="left:730.2px;top:9px;width:1px;height:3px;background:#707070"></div><div class="a" style="left:733.2px;top:8px;width:1px;height:4px;background:#707070"></div><div class="a" style="left:736.2px;top:9px;width:1px;height:3px;background:#707070"></div><div class="a" style="left:739.1px;top:9px;width:1px;height:3px;background:#707070"></div><div class="a" style="left:742.1px;top:9px;width:1px;height:3px;background:#707070"></div><div class="a" style="left:745.0px;top:9px;width:1px;height:3px;background:#707070"></div><div class="a" style="left:748.0px;top:0;width:1px;height:12px;background:#7a7a7a"></div><div class="a" style="left:751.0px;top:9px;width:1px;height:3px;background:#707070"></div><div class="a" style="left:753.9px;top:9px;width:1px;height:3px;background:#707070"></div><div class="a" style="left:756.9px;top:9px;width:1px;height:3px;background:#707070"></div><div class="a" style="left:759.8px;top:9px;width:1px;height:3px;background:#707070"></div><div class="a" style="left:762.8px;top:8px;width:1px;height:4px;background:#707070"></div><div class="a" style="left:765.8px;top:9px;width:1px;height:3px;background:#707070"></div><div class="a" style="left:768.7px;top:9px;width:1px;height:3px;background:#707070"></div><div class="a" style="left:771.7px;top:9px;width:1px;height:3px;background:#707070"></div><div class="a" style="left:774.6px;top:9px;width:1px;height:3px;background:#707070"></div><div class="a" style="left:777.6px;top:0;width:1px;height:12px;background:#7a7a7a"></div><div class="a" style="left:780.6px;top:9px;width:1px;height:3px;background:#707070"></div><div class="a" style="left:783.5px;top:9px;width:1px;height:3px;background:#707070"></div><div class="a" style="left:786.5px;top:9px;width:1px;height:3px;background:#707070"></div><div class="a" style="left:789.4px;top:9px;width:1px;height:3px;background:#707070"></div><div class="a" style="left:792.4px;top:8px;width:1px;height:4px;background:#707070"></div><div class="a" style="left:795.4px;top:9px;width:1px;height:3px;background:#707070"></div><div class="a" style="left:798.3px;top:9px;width:1px;height:3px;background:#707070"></div><div class="a" style="left:801.3px;top:9px;width:1px;height:3px;background:#707070"></div><div class="a" style="left:804.2px;top:9px;width:1px;height:3px;background:#707070"></div><div class="a" style="left:807.2px;top:0;width:1px;height:12px;background:#7a7a7a"></div><div class="a" style="left:810.2px;top:9px;width:1px;height:3px;background:#707070"></div><div class="a" style="left:813.1px;top:9px;width:1px;height:3px;background:#707070"></div><div class="a" style="left:816.1px;top:9px;width:1px;height:3px;background:#707070"></div><div class="a" style="left:819.0px;top:9px;width:1px;height:3px;background:#707070"></div><div class="a" style="left:822.0px;top:8px;width:1px;height:4px;background:#707070"></div><div class="a" style="left:825.0px;top:9px;width:1px;height:3px;background:#707070"></div><div class="a" style="left:827.9px;top:9px;width:1px;height:3px;background:#707070"></div><div class="a" style="left:830.9px;top:9px;width:1px;height:3px;background:#707070"></div><div class="a" style="left:833.8px;top:9px;width:1px;height:3px;background:#707070"></div></div><div class="a" style="left:60px;top:50px;width:12px;height:12px;background:#1e1e1e;border-right:1px solid #444;border-bottom:1px solid #444"></div><div class="a" style="left:60px;top:53px;width:11px;height:1px;background:#3c3c3c"></div><div class="a" style="left:63px;top:50px;width:1px;height:11px;background:#3c3c3c"></div><div class="a" style="left:59px;top:62px;width:13px;height:459px;background:#1e1e1e;overflow:hidden"><div class="a" style="left:0;top:-27.4px;width:13px;height:1px;background:#7a7a7a"></div><div class="t" style="left:2.6px;top:-26.1px;font-size:8px;font-weight:bold;color:#f4f4f4">5</div><div class="t" style="left:2.6px;top:-18.8px;font-size:8px;font-weight:bold;color:#f4f4f4">0</div><div class="a" style="left:10.5px;top:-24.4px;width:2px;height:1px;background:#8a8a8a"></div><div class="a" style="left:10.5px;top:-21.5px;width:2px;height:1px;background:#8a8a8a"></div><div class="a" style="left:10.5px;top:-18.5px;width:2px;height:1px;background:#8a8a8a"></div><div class="a" style="left:10.5px;top:-15.6px;width:2px;height:1px;background:#8a8a8a"></div><div class="a" style="left:9.5px;top:-12.6px;width:3px;height:1px;background:#8a8a8a"></div><div class="a" style="left:10.5px;top:-9.6px;width:2px;height:1px;background:#8a8a8a"></div><div class="a" style="left:10.5px;top:-6.7px;width:2px;height:1px;background:#8a8a8a"></div><div class="a" style="left:10.5px;top:-3.7px;width:2px;height:1px;background:#8a8a8a"></div><div class="a" style="left:10.5px;top:-0.8px;width:2px;height:1px;background:#8a8a8a"></div><div class="a" style="left:0;top:2.2px;width:13px;height:1px;background:#7a7a7a"></div><div class="t" style="left:2.6px;top:3.5px;font-size:8px;font-weight:bold;color:#f4f4f4">6</div><div class="t" style="left:2.6px;top:10.8px;font-size:8px;font-weight:bold;color:#f4f4f4">0</div><div class="a" style="left:10.5px;top:5.2px;width:2px;height:1px;background:#8a8a8a"></div><div class="a" style="left:10.5px;top:8.1px;width:2px;height:1px;background:#8a8a8a"></div><div class="a" style="left:10.5px;top:11.1px;width:2px;height:1px;background:#8a8a8a"></div><div class="a" style="left:10.5px;top:14.0px;width:2px;height:1px;background:#8a8a8a"></div><div class="a" style="left:9.5px;top:17.0px;width:3px;height:1px;background:#8a8a8a"></div><div class="a" style="left:10.5px;top:20.0px;width:2px;height:1px;background:#8a8a8a"></div><div class="a" style="left:10.5px;top:22.9px;width:2px;height:1px;background:#8a8a8a"></div><div class="a" style="left:10.5px;top:25.9px;width:2px;height:1px;background:#8a8a8a"></div><div class="a" style="left:10.5px;top:28.8px;width:2px;height:1px;background:#8a8a8a"></div><div class="a" style="left:0;top:31.8px;width:13px;height:1px;background:#7a7a7a"></div><div class="t" style="left:2.6px;top:33.1px;font-size:8px;font-weight:bold;color:#f4f4f4">7</div><div class="t" style="left:2.6px;top:40.4px;font-size:8px;font-weight:bold;color:#f4f4f4">0</div><div class="a" style="left:10.5px;top:34.8px;width:2px;height:1px;background:#8a8a8a"></div><div class="a" style="left:10.5px;top:37.7px;width:2px;height:1px;background:#8a8a8a"></div><div class="a" style="left:10.5px;top:40.7px;width:2px;height:1px;background:#8a8a8a"></div><div class="a" style="left:10.5px;top:43.6px;width:2px;height:1px;background:#8a8a8a"></div><div class="a" style="left:9.5px;top:46.6px;width:3px;height:1px;background:#8a8a8a"></div><div class="a" style="left:10.5px;top:49.6px;width:2px;height:1px;background:#8a8a8a"></div><div class="a" style="left:10.5px;top:52.5px;width:2px;height:1px;background:#8a8a8a"></div><div class="a" style="left:10.5px;top:55.5px;width:2px;height:1px;background:#8a8a8a"></div><div class="a" style="left:10.5px;top:58.4px;width:2px;height:1px;background:#8a8a8a"></div><div class="a" style="left:0;top:61.4px;width:13px;height:1px;background:#7a7a7a"></div><div class="t" style="left:2.6px;top:62.7px;font-size:8px;font-weight:bold;color:#f4f4f4">8</div><div class="t" style="left:2.6px;top:70.0px;font-size:8px;font-weight:bold;color:#f4f4f4">0</div><div class="a" style="left:10.5px;top:64.4px;width:2px;height:1px;background:#8a8a8a"></div><div class="a" style="left:10.5px;top:67.3px;width:2px;height:1px;background:#8a8a8a"></div><div class="a" style="left:10.5px;top:70.3px;width:2px;height:1px;background:#8a8a8a"></div><div class="a" style="left:10.5px;top:73.2px;width:2px;height:1px;background:#8a8a8a"></div><div class="a" style="left:9.5px;top:76.2px;width:3px;height:1px;background:#8a8a8a"></div><div class="a" style="left:10.5px;top:79.2px;width:2px;height:1px;background:#8a8a8a"></div><div class="a" style="left:10.5px;top:82.1px;width:2px;height:1px;background:#8a8a8a"></div><div class="a" style="left:10.5px;top:85.1px;width:2px;height:1px;background:#8a8a8a"></div><div class="a" style="left:10.5px;top:88.0px;width:2px;height:1px;background:#8a8a8a"></div><div class="a" style="left:0;top:91.0px;width:13px;height:1px;background:#7a7a7a"></div><div class="t" style="left:2.6px;top:92.3px;font-size:8px;font-weight:bold;color:#f4f4f4">9</div><div class="t" style="left:2.6px;top:99.6px;font-size:8px;font-weight:bold;color:#f4f4f4">0</div><div class="a" style="left:10.5px;top:94.0px;width:2px;height:1px;background:#8a8a8a"></div><div class="a" style="left:10.5px;top:96.9px;width:2px;height:1px;background:#8a8a8a"></div><div class="a" style="left:10.5px;top:99.9px;width:2px;height:1px;background:#8a8a8a"></div><div class="a" style="left:10.5px;top:102.8px;width:2px;height:1px;background:#8a8a8a"></div><div class="a" style="left:9.5px;top:105.8px;width:3px;height:1px;background:#8a8a8a"></div><div class="a" style="left:10.5px;top:108.8px;width:2px;height:1px;background:#8a8a8a"></div><div class="a" style="left:10.5px;top:111.7px;width:2px;height:1px;background:#8a8a8a"></div><div class="a" style="left:10.5px;top:114.7px;width:2px;height:1px;background:#8a8a8a"></div><div class="a" style="left:10.5px;top:117.6px;width:2px;height:1px;background:#8a8a8a"></div><div class="a" style="left:0;top:120.6px;width:13px;height:1px;background:#7a7a7a"></div><div class="t" style="left:2.6px;top:121.9px;font-size:8px;font-weight:bold;color:#f4f4f4">1</div><div class="t" style="left:2.6px;top:129.2px;font-size:8px;font-weight:bold;color:#f4f4f4">0</div><div class="t" style="left:2.6px;top:136.5px;font-size:8px;font-weight:bold;color:#f4f4f4">0</div><div class="a" style="left:10.5px;top:123.6px;width:2px;height:1px;background:#8a8a8a"></div><div class="a" style="left:10.5px;top:126.5px;width:2px;height:1px;background:#8a8a8a"></div><div class="a" style="left:10.5px;top:129.5px;width:2px;height:1px;background:#8a8a8a"></div><div class="a" style="left:10.5px;top:132.4px;width:2px;height:1px;background:#8a8a8a"></div><div class="a" style="left:9.5px;top:135.4px;width:3px;height:1px;background:#8a8a8a"></div><div class="a" style="left:10.5px;top:138.4px;width:2px;height:1px;background:#8a8a8a"></div><div class="a" style="left:10.5px;top:141.3px;width:2px;height:1px;background:#8a8a8a"></div><div class="a" style="left:10.5px;top:144.3px;width:2px;height:1px;background:#8a8a8a"></div><div class="a" style="left:10.5px;top:147.2px;width:2px;height:1px;background:#8a8a8a"></div><div class="a" style="left:0;top:150.2px;width:13px;height:1px;background:#7a7a7a"></div><div class="t" style="left:2.6px;top:151.5px;font-size:8px;font-weight:bold;color:#f4f4f4">1</div><div class="t" style="left:2.6px;top:158.8px;font-size:8px;font-weight:bold;color:#f4f4f4">1</div><div class="t" style="left:2.6px;top:166.1px;font-size:8px;font-weight:bold;color:#f4f4f4">0</div><div class="a" style="left:10.5px;top:153.2px;width:2px;height:1px;background:#8a8a8a"></div><div class="a" style="left:10.5px;top:156.1px;width:2px;height:1px;background:#8a8a8a"></div><div class="a" style="left:10.5px;top:159.1px;width:2px;height:1px;background:#8a8a8a"></div><div class="a" style="left:10.5px;top:162.0px;width:2px;height:1px;background:#8a8a8a"></div><div class="a" style="left:9.5px;top:165.0px;width:3px;height:1px;background:#8a8a8a"></div><div class="a" style="left:10.5px;top:168.0px;width:2px;height:1px;background:#8a8a8a"></div><div class="a" style="left:10.5px;top:170.9px;width:2px;height:1px;background:#8a8a8a"></div><div class="a" style="left:10.5px;top:173.9px;width:2px;height:1px;background:#8a8a8a"></div><div class="a" style="left:10.5px;top:176.8px;width:2px;height:1px;background:#8a8a8a"></div><div class="a" style="left:0;top:179.8px;width:13px;height:1px;background:#7a7a7a"></div><div class="t" style="left:2.6px;top:181.1px;font-size:8px;font-weight:bold;color:#f4f4f4">1</div><div class="t" style="left:2.6px;top:188.4px;font-size:8px;font-weight:bold;color:#f4f4f4">2</div><div class="t" style="left:2.6px;top:195.7px;font-size:8px;font-weight:bold;color:#f4f4f4">0</div><div class="a" style="left:10.5px;top:182.8px;width:2px;height:1px;background:#8a8a8a"></div><div class="a" style="left:10.5px;top:185.7px;width:2px;height:1px;background:#8a8a8a"></div><div class="a" style="left:10.5px;top:188.7px;width:2px;height:1px;background:#8a8a8a"></div><div class="a" style="left:10.5px;top:191.6px;width:2px;height:1px;background:#8a8a8a"></div><div class="a" style="left:9.5px;top:194.6px;width:3px;height:1px;background:#8a8a8a"></div><div class="a" style="left:10.5px;top:197.6px;width:2px;height:1px;background:#8a8a8a"></div><div class="a" style="left:10.5px;top:200.5px;width:2px;height:1px;background:#8a8a8a"></div><div class="a" style="left:10.5px;top:203.5px;width:2px;height:1px;background:#8a8a8a"></div><div class="a" style="left:10.5px;top:206.4px;width:2px;height:1px;background:#8a8a8a"></div><div class="a" style="left:0;top:209.4px;width:13px;height:1px;background:#7a7a7a"></div><div class="t" style="left:2.6px;top:210.7px;font-size:8px;font-weight:bold;color:#f4f4f4">1</div><div class="t" style="left:2.6px;top:218.0px;font-size:8px;font-weight:bold;color:#f4f4f4">3</div><div class="t" style="left:2.6px;top:225.3px;font-size:8px;font-weight:bold;color:#f4f4f4">0</div><div class="a" style="left:10.5px;top:212.4px;width:2px;height:1px;background:#8a8a8a"></div><div class="a" style="left:10.5px;top:215.3px;width:2px;height:1px;background:#8a8a8a"></div><div class="a" style="left:10.5px;top:218.3px;width:2px;height:1px;background:#8a8a8a"></div><div class="a" style="left:10.5px;top:221.2px;width:2px;height:1px;background:#8a8a8a"></div><div class="a" style="left:9.5px;top:224.2px;width:3px;height:1px;background:#8a8a8a"></div><div class="a" style="left:10.5px;top:227.2px;width:2px;height:1px;background:#8a8a8a"></div><div class="a" style="left:10.5px;top:230.1px;width:2px;height:1px;background:#8a8a8a"></div><div class="a" style="left:10.5px;top:233.1px;width:2px;height:1px;background:#8a8a8a"></div><div class="a" style="left:10.5px;top:236.0px;width:2px;height:1px;background:#8a8a8a"></div><div class="a" style="left:0;top:239.0px;width:13px;height:1px;background:#7a7a7a"></div><div class="t" style="left:2.6px;top:240.3px;font-size:8px;font-weight:bold;color:#f4f4f4">1</div><div class="t" style="left:2.6px;top:247.6px;font-size:8px;font-weight:bold;color:#f4f4f4">4</div><div class="t" style="left:2.6px;top:254.9px;font-size:8px;font-weight:bold;color:#f4f4f4">0</div><div class="a" style="left:10.5px;top:242.0px;width:2px;height:1px;background:#8a8a8a"></div><div class="a" style="left:10.5px;top:244.9px;width:2px;height:1px;background:#8a8a8a"></div><div class="a" style="left:10.5px;top:247.9px;width:2px;height:1px;background:#8a8a8a"></div><div class="a" style="left:10.5px;top:250.8px;width:2px;height:1px;background:#8a8a8a"></div><div class="a" style="left:9.5px;top:253.8px;width:3px;height:1px;background:#8a8a8a"></div><div class="a" style="left:10.5px;top:256.8px;width:2px;height:1px;background:#8a8a8a"></div><div class="a" style="left:10.5px;top:259.7px;width:2px;height:1px;background:#8a8a8a"></div><div class="a" style="left:10.5px;top:262.7px;width:2px;height:1px;background:#8a8a8a"></div><div class="a" style="left:10.5px;top:265.6px;width:2px;height:1px;background:#8a8a8a"></div><div class="a" style="left:0;top:268.6px;width:13px;height:1px;background:#7a7a7a"></div><div class="t" style="left:2.6px;top:269.9px;font-size:8px;font-weight:bold;color:#f4f4f4">1</div><div class="t" style="left:2.6px;top:277.2px;font-size:8px;font-weight:bold;color:#f4f4f4">5</div><div class="t" style="left:2.6px;top:284.5px;font-size:8px;font-weight:bold;color:#f4f4f4">0</div><div class="a" style="left:10.5px;top:271.6px;width:2px;height:1px;background:#8a8a8a"></div><div class="a" style="left:10.5px;top:274.5px;width:2px;height:1px;background:#8a8a8a"></div><div class="a" style="left:10.5px;top:277.5px;width:2px;height:1px;background:#8a8a8a"></div><div class="a" style="left:10.5px;top:280.4px;width:2px;height:1px;background:#8a8a8a"></div><div class="a" style="left:9.5px;top:283.4px;width:3px;height:1px;background:#8a8a8a"></div><div class="a" style="left:10.5px;top:286.4px;width:2px;height:1px;background:#8a8a8a"></div><div class="a" style="left:10.5px;top:289.3px;width:2px;height:1px;background:#8a8a8a"></div><div class="a" style="left:10.5px;top:292.3px;width:2px;height:1px;background:#8a8a8a"></div><div class="a" style="left:10.5px;top:295.2px;width:2px;height:1px;background:#8a8a8a"></div><div class="a" style="left:0;top:298.2px;width:13px;height:1px;background:#7a7a7a"></div><div class="t" style="left:2.6px;top:299.5px;font-size:8px;font-weight:bold;color:#f4f4f4">1</div><div class="t" style="left:2.6px;top:306.8px;font-size:8px;font-weight:bold;color:#f4f4f4">6</div><div class="t" style="left:2.6px;top:314.1px;font-size:8px;font-weight:bold;color:#f4f4f4">0</div><div class="a" style="left:10.5px;top:301.2px;width:2px;height:1px;background:#8a8a8a"></div><div class="a" style="left:10.5px;top:304.1px;width:2px;height:1px;background:#8a8a8a"></div><div class="a" style="left:10.5px;top:307.1px;width:2px;height:1px;background:#8a8a8a"></div><div class="a" style="left:10.5px;top:310.0px;width:2px;height:1px;background:#8a8a8a"></div><div class="a" style="left:9.5px;top:313.0px;width:3px;height:1px;background:#8a8a8a"></div><div class="a" style="left:10.5px;top:316.0px;width:2px;height:1px;background:#8a8a8a"></div><div class="a" style="left:10.5px;top:318.9px;width:2px;height:1px;background:#8a8a8a"></div><div class="a" style="left:10.5px;top:321.9px;width:2px;height:1px;background:#8a8a8a"></div><div class="a" style="left:10.5px;top:324.8px;width:2px;height:1px;background:#8a8a8a"></div><div class="a" style="left:0;top:327.8px;width:13px;height:1px;background:#7a7a7a"></div><div class="t" style="left:2.6px;top:329.1px;font-size:8px;font-weight:bold;color:#f4f4f4">1</div><div class="t" style="left:2.6px;top:336.4px;font-size:8px;font-weight:bold;color:#f4f4f4">7</div><div class="t" style="left:2.6px;top:343.7px;font-size:8px;font-weight:bold;color:#f4f4f4">0</div><div class="a" style="left:10.5px;top:330.8px;width:2px;height:1px;background:#8a8a8a"></div><div class="a" style="left:10.5px;top:333.7px;width:2px;height:1px;background:#8a8a8a"></div><div class="a" style="left:10.5px;top:336.7px;width:2px;height:1px;background:#8a8a8a"></div><div class="a" style="left:10.5px;top:339.6px;width:2px;height:1px;background:#8a8a8a"></div><div class="a" style="left:9.5px;top:342.6px;width:3px;height:1px;background:#8a8a8a"></div><div class="a" style="left:10.5px;top:345.6px;width:2px;height:1px;background:#8a8a8a"></div><div class="a" style="left:10.5px;top:348.5px;width:2px;height:1px;background:#8a8a8a"></div><div class="a" style="left:10.5px;top:351.5px;width:2px;height:1px;background:#8a8a8a"></div><div class="a" style="left:10.5px;top:354.4px;width:2px;height:1px;background:#8a8a8a"></div><div class="a" style="left:0;top:357.4px;width:13px;height:1px;background:#7a7a7a"></div><div class="t" style="left:2.6px;top:358.7px;font-size:8px;font-weight:bold;color:#f4f4f4">1</div><div class="t" style="left:2.6px;top:366.0px;font-size:8px;font-weight:bold;color:#f4f4f4">8</div><div class="t" style="left:2.6px;top:373.3px;font-size:8px;font-weight:bold;color:#f4f4f4">0</div><div class="a" style="left:10.5px;top:360.4px;width:2px;height:1px;background:#8a8a8a"></div><div class="a" style="left:10.5px;top:363.3px;width:2px;height:1px;background:#8a8a8a"></div><div class="a" style="left:10.5px;top:366.3px;width:2px;height:1px;background:#8a8a8a"></div><div class="a" style="left:10.5px;top:369.2px;width:2px;height:1px;background:#8a8a8a"></div><div class="a" style="left:9.5px;top:372.2px;width:3px;height:1px;background:#8a8a8a"></div><div class="a" style="left:10.5px;top:375.2px;width:2px;height:1px;background:#8a8a8a"></div><div class="a" style="left:10.5px;top:378.1px;width:2px;height:1px;background:#8a8a8a"></div><div class="a" style="left:10.5px;top:381.1px;width:2px;height:1px;background:#8a8a8a"></div><div class="a" style="left:10.5px;top:384.0px;width:2px;height:1px;background:#8a8a8a"></div><div class="a" style="left:0;top:387.0px;width:13px;height:1px;background:#7a7a7a"></div><div class="t" style="left:2.6px;top:388.3px;font-size:8px;font-weight:bold;color:#f4f4f4">1</div><div class="t" style="left:2.6px;top:395.6px;font-size:8px;font-weight:bold;color:#f4f4f4">9</div><div class="t" style="left:2.6px;top:402.9px;font-size:8px;font-weight:bold;color:#f4f4f4">0</div><div class="a" style="left:10.5px;top:390.0px;width:2px;height:1px;background:#8a8a8a"></div><div class="a" style="left:10.5px;top:392.9px;width:2px;height:1px;background:#8a8a8a"></div><div class="a" style="left:10.5px;top:395.9px;width:2px;height:1px;background:#8a8a8a"></div><div class="a" style="left:10.5px;top:398.8px;width:2px;height:1px;background:#8a8a8a"></div><div class="a" style="left:9.5px;top:401.8px;width:3px;height:1px;background:#8a8a8a"></div><div class="a" style="left:10.5px;top:404.8px;width:2px;height:1px;background:#8a8a8a"></div><div class="a" style="left:10.5px;top:407.7px;width:2px;height:1px;background:#8a8a8a"></div><div class="a" style="left:10.5px;top:410.7px;width:2px;height:1px;background:#8a8a8a"></div><div class="a" style="left:10.5px;top:413.6px;width:2px;height:1px;background:#8a8a8a"></div><div class="a" style="left:0;top:416.6px;width:13px;height:1px;background:#7a7a7a"></div><div class="t" style="left:2.6px;top:417.9px;font-size:8px;font-weight:bold;color:#f4f4f4">2</div><div class="t" style="left:2.6px;top:425.2px;font-size:8px;font-weight:bold;color:#f4f4f4">0</div><div class="t" style="left:2.6px;top:432.5px;font-size:8px;font-weight:bold;color:#f4f4f4">0</div><div class="a" style="left:10.5px;top:419.6px;width:2px;height:1px;background:#8a8a8a"></div><div class="a" style="left:10.5px;top:422.5px;width:2px;height:1px;background:#8a8a8a"></div><div class="a" style="left:10.5px;top:425.5px;width:2px;height:1px;background:#8a8a8a"></div><div class="a" style="left:10.5px;top:428.4px;width:2px;height:1px;background:#8a8a8a"></div><div class="a" style="left:9.5px;top:431.4px;width:3px;height:1px;background:#8a8a8a"></div><div class="a" style="left:10.5px;top:434.4px;width:2px;height:1px;background:#8a8a8a"></div><div class="a" style="left:10.5px;top:437.3px;width:2px;height:1px;background:#8a8a8a"></div><div class="a" style="left:10.5px;top:440.3px;width:2px;height:1px;background:#8a8a8a"></div><div class="a" style="left:10.5px;top:443.2px;width:2px;height:1px;background:#8a8a8a"></div><div class="a" style="left:0;top:446.2px;width:13px;height:1px;background:#7a7a7a"></div><div class="t" style="left:2.6px;top:447.5px;font-size:8px;font-weight:bold;color:#f4f4f4">2</div><div class="t" style="left:2.6px;top:454.8px;font-size:8px;font-weight:bold;color:#f4f4f4">1</div><div class="t" style="left:2.6px;top:462.1px;font-size:8px;font-weight:bold;color:#f4f4f4">0</div><div class="a" style="left:10.5px;top:449.2px;width:2px;height:1px;background:#8a8a8a"></div><div class="a" style="left:10.5px;top:452.1px;width:2px;height:1px;background:#8a8a8a"></div><div class="a" style="left:10.5px;top:455.1px;width:2px;height:1px;background:#8a8a8a"></div><div class="a" style="left:10.5px;top:458.0px;width:2px;height:1px;background:#8a8a8a"></div><div class="a" style="left:9.5px;top:461.0px;width:3px;height:1px;background:#8a8a8a"></div><div class="a" style="left:10.5px;top:464.0px;width:2px;height:1px;background:#8a8a8a"></div><div class="a" style="left:10.5px;top:466.9px;width:2px;height:1px;background:#8a8a8a"></div><div class="a" style="left:10.5px;top:469.9px;width:2px;height:1px;background:#8a8a8a"></div><div class="a" style="left:10.5px;top:472.8px;width:2px;height:1px;background:#8a8a8a"></div><div class="a" style="left:0;top:475.8px;width:13px;height:1px;background:#7a7a7a"></div><div class="t" style="left:2.6px;top:477.1px;font-size:8px;font-weight:bold;color:#f4f4f4">2</div><div class="t" style="left:2.6px;top:484.4px;font-size:8px;font-weight:bold;color:#f4f4f4">2</div><div class="t" style="left:2.6px;top:491.7px;font-size:8px;font-weight:bold;color:#f4f4f4">0</div><div class="a" style="left:10.5px;top:478.8px;width:2px;height:1px;background:#8a8a8a"></div><div class="a" style="left:10.5px;top:481.7px;width:2px;height:1px;background:#8a8a8a"></div><div class="a" style="left:10.5px;top:484.7px;width:2px;height:1px;background:#8a8a8a"></div><div class="a" style="left:10.5px;top:487.6px;width:2px;height:1px;background:#8a8a8a"></div><div class="a" style="left:9.5px;top:490.6px;width:3px;height:1px;background:#8a8a8a"></div><div class="a" style="left:10.5px;top:493.6px;width:2px;height:1px;background:#8a8a8a"></div><div class="a" style="left:10.5px;top:496.5px;width:2px;height:1px;background:#8a8a8a"></div><div class="a" style="left:10.5px;top:499.5px;width:2px;height:1px;background:#8a8a8a"></div><div class="a" style="left:10.5px;top:502.4px;width:2px;height:1px;background:#8a8a8a"></div></div><div class="a" style="left:834px;top:49px;width:16px;height:472px;background:#474747"></div><div class="a" style="left:845px;top:27px;width:2px;height:494px;background:#595959"></div><div class="a" style="left:847px;top:27px;width:3px;height:494px;background:#3e3e3e"></div><svg class="a" style="left:836px;top:52px" width="10" height="6" viewBox="0 0 10 6"><path d="M1 5 L5 1 L9 5" stroke="#7a7a7a" stroke-width="1.3" fill="none"/></svg><div class="a" style="left:835.5px;top:193px;width:9.5px;height:21px;background:#6e6e6e;border-radius:5px"></div><div class="a" style="left:597px;top:90px;width:185px;height:414px;background:#535353;border-radius:4px 4px 0 0;overflow:hidden"><div class="a" style="left:0;top:0;width:185px;height:11px;background:#3b3b3b"></div><div class="a" style="left:0;top:11px;width:185px;height:21px;background:#434343"></div><div class="a" style="left:0;top:11px;width:49px;height:21px;background:#535353"></div><div class="a" style="left:0;top:120px;width:185px;height:1px;background:#474747"></div><div class="a" style="left:0;top:388px;width:185px;height:1px;background:#444"></div><div class="a" style="left:0;top:407.5px;width:185px;height:6.5px;background:#434343"></div><div class="a" style="left:80px;top:408px;width:24px;height:3px;background:#4c4c4c;border-radius:1px"></div></div><svg class="a" style="left:757px;top:93px" width="22" height="7" viewBox="0 0 22 7"><path d="M3.3 1.2 L1.2 3.5 L3.3 5.8 Z M5.8 1.2 L3.7 3.5 L5.8 5.8 Z" fill="#c8c8c8"/><path d="M16 1 L20.5 5.5 M20.5 1 L16 5.5" stroke="#d8d8d8" stroke-width="1.2"/></svg><svg class="a" style="left:603.5px;top:107.5px" width="5" height="9" viewBox="0 0 5 9"><path d="M0.8 3.2 L2.5 1.2 L4.2 3.2 M0.8 5.8 L2.5 7.8 L4.2 5.8" fill="none" stroke="#d8d8d8" stroke-width="0.9"/></svg><div class="t" style="left:611.9px;top:107.5px;font-size:10.5px;color:#f0f0f0;font-weight:bold;transform:scaleX(0.7919)">Pages</div><svg class="a" style="left:768px;top:108.5px" width="9" height="7" viewBox="0 0 9 7"><path d="M0 0.5 H9 M0 2.5 H9 M0 4.5 H9 M0 6.5 H9" stroke="#aaaaaa" stroke-width="1"/><path d="M2.5 0 V7 M5 0 V7" stroke="#434343" stroke-width="0.6"/></svg><div class="t" style="left:600px;top:129.5px;font-size:9.5px;color:#e8e8e8;transform:scaleX(0.8750)">[None]</div><div class="t" style="left:600px;top:152px;font-size:9.5px;color:#e8e8e8;transform:scaleX(0.8302)">A-Master</div><div class="t" style="left:600px;top:174.3px;font-size:9.5px;color:#e8e8e8;transform:scaleX(0.8302)">B-Master</div><div class="a" style="left:749.3px;top:126px;width:14.8px;height:17.5px;background:#fff"></div><div class="a" style="left:734.2px;top:148.5px;width:14.8px;height:18px;background:#fff"></div><div class="a" style="left:749.6px;top:148.5px;width:14.5px;height:18px;background:#fff"></div><div class="a" style="left:762px;top:163.5px;width:1px;height:2px;background:#999"></div><div class="a" style="left:734.2px;top:171.3px;width:14.8px;height:18px;background:#fff"></div><div class="a" style="left:749.6px;top:171.3px;width:14.5px;height:18px;background:#fff"></div><div class="a" style="left:762px;top:186.3px;width:1px;height:2px;background:#999"></div><svg class="a" style="left:691px;top:215px" width="9" height="4" viewBox="0 0 9 4"><path d="M0 0 H9 L4.5 4 Z" fill="#d0d0d0"/></svg><div class="a" style="left:685px;top:220px;width:21px;height:27.5px;overflow:hidden;background:#fff"><svg class="a" style="left:0;top:0" width="22" height="28" viewBox="0 0 22 28"><path d="M0 0 H22 V21 L0 9 Z" fill="#1f3242"/><path d="M13 0 H22 V4 Z" fill="#fff"/><path d="M0 9 L0 14 L14 22 L19.5 20 Z" fill="#5cbf62"/><path d="M18.5 6.5 L22 4.5 V9 L19 10.5 Z" fill="#5cbf62"/><path d="M9.5 1 L15 4.2 V10.8 L9.5 14 L4 10.8 V4.2 Z" fill="#5ec6e2"/><rect x="1.5" y="22" width="8" height="1.5" fill="#6cc070"/><rect x="1.5" y="24.3" width="13" height="1.3" fill="#333"/><rect x="1.5" y="26.3" width="4" height="1" fill="#999"/></svg></div><div class="t" style="left:691.2px;top:253.8px;font-size:10px;color:#f0f0f0">1</div><div class="a" style="left:662.5px;top:270.8px;width:43.5px;height:26.5px;overflow:hidden;background:#fff"><div class="a" style="left:1px;top:1px;width:21px;height:24.5px;background:#5cc5e3"></div><div class="a" style="left:22px;top:1px;width:20.5px;height:24.5px;background:#1f3444"></div><div class="a" style="left:1px;top:1px;width:7px;height:7px;background:#fff"></div><div class="a" style="left:36.5px;top:1px;width:7px;height:7px;background:#fff"></div><div class="a" style="left:24px;top:2px;width:12px;height:2px;background:#4aa860"></div><div class="a" style="left:29px;top:7px;width:7px;height:2.5px;background:#c0c0c0"></div><div class="a" style="left:29px;top:11px;width:7px;height:2.5px;background:#c0c0c0"></div><div class="a" style="left:29px;top:15px;width:7px;height:2.5px;background:#c0c0c0"></div><div class="a" style="left:4px;top:11px;width:15px;height:1px;background:#b8e6f2"></div><div class="a" style="left:13px;top:20px;width:29px;height:5px;background:#5cbf62"></div><div class="t" style="left:1.5px;top:1px;font-size:7px;font-weight:bold;color:#222">B</div><div class="t" style="left:37.5px;top:1px;font-size:7px;font-weight:bold;color:#222">B</div></div><div class="t" style="left:676px;top:303.2px;font-size:10.5px;color:#f2f2f2;transform:scaleX(0.8230)">2-3</div><div class="a" style="left:662.5px;top:320.5px;width:43.5px;height:27px;overflow:hidden;background:#fff"><div class="a" style="left:1px;top:1px;width:20px;height:25px;background:#5cc5e3"></div><div class="a" style="left:22px;top:1px;width:20.5px;height:25px;background:#ececec"></div><div class="a" style="left:1px;top:1px;width:7px;height:7px;background:#fff"></div><div class="a" style="left:36.5px;top:1px;width:7px;height:7px;background:#fff"></div><div class="a" style="left:4px;top:12px;width:14px;height:1px;background:#b8e6f2"></div><div class="a" style="left:24px;top:3px;width:11px;height:1.5px;background:#777"></div><div class="a" style="left:23px;top:7px;width:5px;height:14px;background:#c4c4c4"></div><div class="a" style="left:30px;top:7px;width:5px;height:15px;background:#5a5a5a"></div><div class="a" style="left:36px;top:9px;width:5px;height:13px;background:#6a6a6a"></div><div class="a" style="left:38px;top:22.5px;width:4px;height:2px;background:#888"></div><div class="t" style="left:1.5px;top:1px;font-size:7px;font-weight:bold;color:#222">A</div><div class="t" style="left:37.5px;top:1px;font-size:7px;font-weight:bold;color:#222">A</div></div><div class="t" style="left:676px;top:353.7px;font-size:10.5px;color:#f2f2f2;transform:scaleX(0.8230)">4-5</div><div class="a" style="left:662.5px;top:371.4px;width:43.5px;height:26.6px;overflow:hidden;background:#fff"><div class="a" style="left:1px;top:9px;width:9px;height:2px;background:#555"></div><div class="a" style="left:9px;top:3px;width:4px;height:1.5px;background:#8fd08f"></div><div class="a" style="left:1px;top:12px;width:9px;height:3px;background:#6cc070"></div><div class="a" style="left:1px;top:16.5px;width:9px;height:2px;background:#888"></div><div class="a" style="left:1px;top:20px;width:9px;height:5px;background:#4fc0dc"></div><div class="a" style="left:12px;top:6px;width:9px;height:19px;background:#d8d8d8"></div><div class="a" style="left:13px;top:8px;width:3px;height:3px;background:#666"></div><div class="a" style="left:17px;top:8px;width:3px;height:3px;background:#666"></div><div class="a" style="left:13px;top:12.5px;width:3px;height:3px;background:#666"></div><div class="a" style="left:17px;top:12.5px;width:3px;height:3px;background:#666"></div><div class="a" style="left:13px;top:17px;width:7px;height:3px;background:#777"></div><div class="a" style="left:13px;top:21.5px;width:7px;height:2px;background:#999"></div><div class="a" style="left:23px;top:4px;width:8px;height:1.5px;background:#777"></div><div class="a" style="left:23px;top:7px;width:8px;height:4px;background:#777"></div><div class="a" style="left:23px;top:12.5px;width:8px;height:2.5px;background:#6cc070"></div><div class="a" style="left:23px;top:17px;width:8px;height:4px;background:#888"></div><div class="a" style="left:33px;top:8px;width:10px;height:18px;background:#4fc0dc"></div><div class="a" style="left:34px;top:20px;width:8px;height:4px;background:#2a5f88"></div><div class="a" style="left:36px;top:0;width:8px;height:8px;background:#fff"></div><div class="t" style="left:1px;top:0.5px;font-size:8px;font-weight:bold;color:#111">A</div><div class="t" style="left:37px;top:0.5px;font-size:8px;font-weight:bold;color:#111">A</div></div><div class="t" style="left:676px;top:404.2px;font-size:10.5px;color:#f2f2f2;transform:scaleX(0.8230)">6-7</div><div class="a" style="left:662.5px;top:420.8px;width:43.8px;height:27.2px;overflow:hidden;background:#fff"><div class="a" style="left:0;top:0;width:44px;height:8px;background:#a6d4f2"></div><div class="a" style="left:0;top:8px;width:44px;height:10px;background:#62b2e6"></div><div class="a" style="left:0;top:18px;width:44px;height:10px;background:#3a86c8"></div><div class="a" style="left:13px;top:8px;width:8px;height:10px;background:#7cc0ea"></div><div class="a" style="left:24px;top:6px;width:6px;height:8px;background:#8ccaf0"></div><div class="a" style="left:31px;top:9px;width:12px;height:7px;background:#4f9fd8"></div><div class="a" style="left:2px;top:20px;width:16px;height:1px;background:#8ab8e0"></div><div class="a" style="left:2px;top:23px;width:16px;height:1px;background:#8ab8e0"></div><div class="a" style="left:24px;top:20px;width:18px;height:1px;background:#6aa0d0"></div><div class="a" style="left:24px;top:23px;width:18px;height:1px;background:#6aa0d0"></div><div class="a" style="left:0;top:0;width:8px;height:8px;background:#fff"></div><div class="a" style="left:36px;top:0;width:8px;height:8px;background:#fff"></div><div class="t" style="left:1px;top:0.5px;font-size:8.5px;font-weight:bold;color:#111">A</div><div class="t" style="left:37px;top:0.5px;font-size:8.5px;font-weight:bold;color:#111">A</div></div><div class="a" style="left:673.8px;top:452.2px;width:17.8px;height:12px;background:#2d8de0"></div><div class="t" style="left:676.2px;top:453.4px;font-size:10.5px;color:#ffffff;font-weight:bold;transform:scaleX(0.8560)">8-9</div><div class="a" style="left:662.5px;top:471.5px;width:43.8px;height:7.5px;overflow:hidden;background:#fff"><div class="a" style="left:7px;top:1px;width:13px;height:6px;background:#6cc070"></div><div class="a" style="left:23px;top:1px;width:13px;height:6px;background:#6cc070"></div><div class="t" style="left:1px;top:0px;font-size:8px;font-weight:bold;color:#111">A</div><div class="t" style="left:37px;top:0px;font-size:8px;font-weight:bold;color:#111">A</div></div><div class="a" style="left:684.5px;top:215px;width:1px;height:33px;background:#c8c8c8"></div><div class="a" style="left:684.5px;top:265px;width:1px;height:35px;background:#c8c8c8"></div><div class="a" style="left:684.5px;top:315px;width:1px;height:35px;background:#c8c8c8"></div><div class="a" style="left:684.5px;top:365px;width:1px;height:36px;background:#c8c8c8"></div><div class="a" style="left:684.5px;top:415px;width:1px;height:37px;background:#c8c8c8"></div><div class="a" style="left:684.5px;top:465px;width:1px;height:14px;background:#c8c8c8"></div><div class="a" style="left:771px;top:212px;width:11px;height:266px;background:#4e4e4e"></div><div class="a" style="left:772px;top:224px;width:8px;height:80px;background:#6a6a6a;border-radius:4px"></div><svg class="a" style="left:771px;top:215px" width="10" height="6" viewBox="0 0 10 6"><path d="M1.5 5 L5 1.5 L8.5 5" stroke="#6e6e6e" stroke-width="1.2" fill="none"/></svg><svg class="a" style="left:771px;top:470px" width="10" height="6" viewBox="0 0 10 6"><path d="M1.5 1 L5 4.5 L8.5 1" stroke="#6e6e6e" stroke-width="1.2" fill="none"/></svg><div class="t" style="left:602px;top:485px;font-size:9.5px;color:#e0e0e0;transform:scaleX(0.7988)">30 Pages in 16 Spreads</div><svg class="a" style="left:706px;top:481.5px" width="60" height="14" viewBox="0 0 60 14"><rect x="1.5" y="5.5" width="7" height="4.5" fill="none" stroke="#cfcfcf" stroke-width="1.2"/><path d="M4 6.5 V9.5 M5.5 6.5 V9.5" stroke="#cfcfcf" stroke-width="0.8"/><path d="M5.5 4.5 L9 1.8 L12.5 5.3 L9.8 9.2 Z" fill="#535353" stroke="#cfcfcf" stroke-width="1.2"/><path d="M7.5 4.5 L10.5 7.5" stroke="#cfcfcf" stroke-width="0.9"/><path d="M13.5 9 H16 L14.75 10.3 Z" fill="#cfcfcf"/><rect x="26.5" y="2.5" width="9" height="9" fill="none" stroke="#cfcfcf" stroke-width="1.2"/><path d="M31 4.5 V9.5 M28.5 7 H33.5" stroke="#cfcfcf" stroke-width="1.2"/><path d="M47.5 4 H56.5 M50 4 V2.2 H54 V4 M48.5 4 V11.8 H55.5 V4 M50.7 6 V10 M52 6 V10 M53.3 6 V10" fill="none" stroke="#cfcfcf" stroke-width="1.1"/></svg><div class="a" style="left:3px;top:28px;width:55px;height:493px;background:#535353;border-left:1px solid #464646;border-right:1px solid #464646"></div><div class="a" style="left:3px;top:28px;width:55px;height:9px;background:#3c3c3c"></div><div class="t" style="left:22px;top:38px;font-size:6px;color:#626262">Tools</div><svg class="a" style="left:6px;top:29.5px" width="7" height="5" viewBox="0 0 7 5"><path d="M3 0 L0.5 2.5 L3 5 Z M6.5 0 L4 2.5 L6.5 5 Z" fill="#d8d8d8"/></svg><div class="a" style="left:7.5px;top:49px;width:21px;height:17px;background:#393939;border-radius:2px"></div><svg class="a" style="left:0;top:0" width="60" height="240" viewBox="0 0 60 240"><path d="M14.5 51.5 L14.5 63 L17.8 59.5 L23.5 59.5 Z" fill="none" stroke="#d2d2d2" stroke-width="1.1" stroke-linejoin="miter"/><path d="M37 51 L37 63 L40.5 59.5 L47 59.5 Z" fill="#d2d2d2"/><path d="M13.2 71.2 H19 L22 74.2 V76.5 M13.2 71.2 V80.8 H17.5 M19 71.2 V74.2 H22" fill="none" stroke="#d2d2d2" stroke-width="1.1" stroke-linejoin="miter"/><path d="M18.8 75.5 L18.8 82.5 L20.8 80.6 L24.5 80.6 Z" fill="#d2d2d2"/><path d="M34.5 70.5 V81 M48.5 70.5 V81 M36.5 75.8 H46.5 M38.5 73.8 L36.5 75.8 L38.5 77.8 M44.5 73.8 L46.5 75.8 L44.5 77.8" fill="none" stroke="#d2d2d2" stroke-width="1.2"/><path d="M12.8 92 V100.5 H24 V92" fill="none" stroke="#d2d2d2" stroke-width="1.2"/><path d="M15 95.5 h1.5 M18 95.5 h1.5 M21 95.5 h1.5 M15 98 h1.5 M18 98 h1.5 M21 98 h1.5" stroke="#d2d2d2" stroke-width="1.3"/><path d="M14.5 88.5 L19 93 M19 90.5 V93 H16.5" fill="none" stroke="#d2d2d2" stroke-width="1.2"/><path d="M36.3 92 V100.5 H47.5 V92" fill="none" stroke="#d2d2d2" stroke-width="1.2"/><path d="M38.5 95.5 h1.5 M41.5 95.5 h1.5 M44.5 95.5 h1.5 M38.5 98 h1.5 M41.5 98 h1.5 M44.5 98 h1.5" stroke="#d2d2d2" stroke-width="1.3"/><path d="M41.5 93.5 L46.5 88.5 M43.5 88.5 H46.5 V91.5" fill="none" stroke="#d2d2d2" stroke-width="1.2"/><path d="M12.5 110.5 H23.5 V113.5 M12.5 110.5 V113.5 M18 110.5 V121 M15.5 121.2 H20.5" fill="none" stroke="#d2d2d2" stroke-width="1.6"/><path d="M25.5 123.3 L28.8 120 V123.3 Z" fill="#d2d2d2"/><path d="M36.5 121 L46.5 110.5" stroke="#d2d2d2" stroke-width="1.3"/><path d="M9 130.5 H15.5" stroke="#d2d2d2" stroke-width="1.4"/><path d="M13 141.5 L14.5 135 L20 129.8 L25 134.8 L19.8 140 Z" fill="#d2d2d2"/><path d="M20.8 129 L22.5 127.5 L26.5 131.5 L25.8 134" fill="#d2d2d2"/><path d="M13.2 141.3 L17.5 137" stroke="#535353" stroke-width="1"/><circle cx="18" cy="136.5" r="1" fill="#535353"/><path d="M25.5 142.8 L28.8 139.5 V142.8 Z" fill="#d2d2d2"/><path d="M35.5 140.5 L37 136 L44.5 128.5 L47.5 131.5 L40 139 Z" fill="#d2d2d2"/><path d="M48.5 142.8 L51.8 139.5 V142.8 Z" fill="#d2d2d2"/><rect x="12" y="148.5" width="12" height="10" fill="none" stroke="#d2d2d2" stroke-width="1.2"/><path d="M12 148.5 L24 158.5 M24 148.5 L12 158.5" stroke="#d2d2d2" stroke-width="1.1"/><path d="M25.5 160.8 L28.8 157.5 V160.8 Z" fill="#d2d2d2"/><defs><linearGradient id="rg" x1="0" y1="0" x2="1" y2="1"><stop offset="0" stop-color="#7a7a7a"/><stop offset="1" stop-color="#5a5a5a"/></linearGradient><linearGradient id="gg" x1="0" y1="0" x2="1" y2="0"><stop offset="0" stop-color="#f0f0f0"/><stop offset="1" stop-color="#404040"/></linearGradient><linearGradient id="gf" x1="0" y1="0" x2="0" y2="1"><stop offset="0" stop-color="#505050"/><stop offset="1" stop-color="#e0e0e0"/></linearGradient></defs><rect x="35.5" y="148.5" width="12" height="10" fill="url(#rg)" stroke="#d2d2d2" stroke-width="1.1"/><path d="M48.5 160.8 L51.8 157.5 V160.8 Z" fill="#d2d2d2"/><circle cx="22" cy="170.8" r="2.2" fill="none" stroke="#d2d2d2" stroke-width="1.2"/><circle cx="22" cy="178.4" r="2.2" fill="none" stroke="#d2d2d2" stroke-width="1.2"/><path d="M11.5 169 L20 177 M11.5 180.5 L20 172.2" stroke="#d2d2d2" stroke-width="1.3"/><path d="M37.5 170.5 A5.5 5.5 0 1 1 36.5 176" fill="none" stroke="#d2d2d2" stroke-width="1.3"/><path d="M35.2 168.5 L38.5 168.8 L38 172" fill="none" stroke="#d2d2d2" stroke-width="1.2"/><path d="M48.5 181.8 L51.8 178.5 V181.8 Z" fill="#d2d2d2"/><rect x="12" y="188.5" width="12" height="10" fill="url(#gg)" stroke="#d2d2d2" stroke-width="1.1"/><rect x="35.5" y="188.5" width="12" height="10" fill="url(#gf)" stroke="#d2d2d2" stroke-width="1.1"/><path d="M13 209 H23.5 V216.5 L20.5 219.8 H13 Z" fill="#d2d2d2"/><path d="M15 211.5 H21.5 M15 213.8 H21.5 M15 216 H19" stroke="#535353" stroke-width="1"/><path d="M35.5 220.5 L36 218 L43 211 L45.2 213.2 L38 220 Z" fill="none" stroke="#d2d2d2" stroke-width="1.2"/><path d="M42 209.5 L44.5 207.8 L48.5 211.8 L46.8 214.3 Z" fill="#d2d2d2"/><path d="M49.5 222.8 L52.8 219.5 V222.8 Z" fill="#d2d2d2"/><path d="M13.2 233.5 L11.3 230.8 C10.8 230 11.8 229.2 12.6 229.9 L14.2 231.4 V225.6 C14.2 224.7 15.6 224.7 15.6 225.6 V229.8 V224.6 C15.6 223.7 17 223.7 17 224.6 V229.8 V225 C17 224.1 18.4 224.1 18.4 225 V229.8 V226.2 C18.4 225.3 19.8 225.3 19.8 226.2 L19.8 233.2 C19.8 236.2 18.3 237.6 16 237.6 C14.8 237.6 14 236.8 13.2 235.3 Z" fill="#e2e2e2"/><path d="M15.6 228 V230 M17 228 V230 M18.4 228 V230" stroke="#535353" stroke-width="0.5"/><circle cx="40" cy="231.5" r="4.3" fill="none" stroke="#d2d2d2" stroke-width="1.3"/><path d="M43.2 234.8 L47 238" stroke="#d2d2d2" stroke-width="1.6"/></svg><div class="a" style="left:3.5px;top:239px;width:56.5px;height:58.5px;border:1px solid #8a8a8a;border-radius:5px;background:#535353;box-shadow:0 0 0 1px #383838, 1px 1px 2px rgba(0,0,0,0.4)"></div><div class="a" style="left:23.5px;top:261.8px;width:27px;height:26.5px;background:#fafafa"></div><div class="a" style="left:30.7px;top:270px;width:12.5px;height:11.6px;background:#535353"></div><svg class="a" style="left:23.5px;top:261.8px" width="27" height="27" viewBox="0 0 27 27"><path d="M0.5 26.5 L26.5 0.5" stroke="#e8202a" stroke-width="1.6"/></svg><div class="a" style="left:9.2px;top:247px;width:28px;height:28px;background:#7dcdd6;border:1px solid #cfcfcf"></div><svg class="a" style="left:44px;top:248px" width="10" height="10" viewBox="0 0 10 10"><path d="M1 2.5 H6.5 V8.5 M4.5 0.8 L6.5 2.8 M1.8 3.5 H3 M6.5 8.5 L4.8 6.8 M6.5 8.5 L8.2 6.8" fill="none" stroke="#d8d8d8" stroke-width="1.1"/></svg><div class="a" style="left:13px;top:282.5px;width:6px;height:5px;background:#111;border:1px solid #ddd"></div><div class="a" style="left:10px;top:279.7px;width:6px;height:5px;background:#f5f5f5;border:1px solid #e03030"></div><div class="a" style="left:14px;top:297px;width:12px;height:8px;background:#3a3a3a"></div><div class="a" style="left:16.5px;top:297px;width:6px;height:5px;border:1px solid #aaa;border-top:none"></div><div class="a" style="left:37.5px;top:299px;width:1px;height:6px;background:#888"></div><div class="a" style="left:7.4px;top:314px;width:13.3px;height:14px;background:#2f2f2f;border-radius:1px"></div><div class="a" style="left:9px;top:316px;width:10px;height:10px;background:#7dcdd6;border:1px solid #e8e8e8"></div><div class="a" style="left:25px;top:316px;width:10px;height:10px;background:linear-gradient(90deg,#f5f5f5,#444);border:1px solid #ddd"></div><div class="a" style="left:40.6px;top:316px;width:10px;height:10px;background:#fafafa;border:1px solid #ddd"></div><svg class="a" style="left:40.6px;top:316px" width="10" height="10" viewBox="0 0 10 10"><path d="M0.5 9.5 L9.5 0.5" stroke="#e8202a" stroke-width="1.4"/></svg><svg class="a" style="left:48.5px;top:324.5px" width="4" height="4" viewBox="0 0 4 4"><path d="M0 4 L4 0 V4 Z" fill="#ccc"/></svg><svg class="a" style="left:12px;top:337px" width="16" height="14" viewBox="0 0 16 14"><path d="M1.5 1 h1.5 M4.5 1 h1.5 M7.5 1 h1.5 M10.5 1 h1.5" stroke="#cfcfcf" stroke-width="1"/><rect x="3" y="3.5" width="9.5" height="5.5" fill="#d0d0d0"/><path d="M1 3.5 h1 M1 6 h1 M1 8.5 h1" stroke="#cfcfcf"/><path d="M12.5 11.8 L15.8 8.5 V11.8 Z" fill="#ccc"/></svg><div class="a" style="left:31px;top:355.3px;width:20.8px;height:15.7px;background:#393939;border-radius:2px"></div><div class="a" style="left:13.8px;top:358.8px;width:9.5px;height:9px;border:1.2px solid #cfcfcf"></div><div class="a" style="left:15.8px;top:360.8px;width:5.5px;height:5px;border:1px solid #cfcfcf"></div><div class="a" style="left:36.5px;top:358.8px;width:10px;height:9px;border:1.2px solid #cfcfcf;border-top-width:2px"></div><svg class="a" style="left:48.5px;top:367px" width="4" height="4" viewBox="0 0 4 4"><path d="M0 4 L4 0 V4 Z" fill="#ccc"/></svg></body></html>
